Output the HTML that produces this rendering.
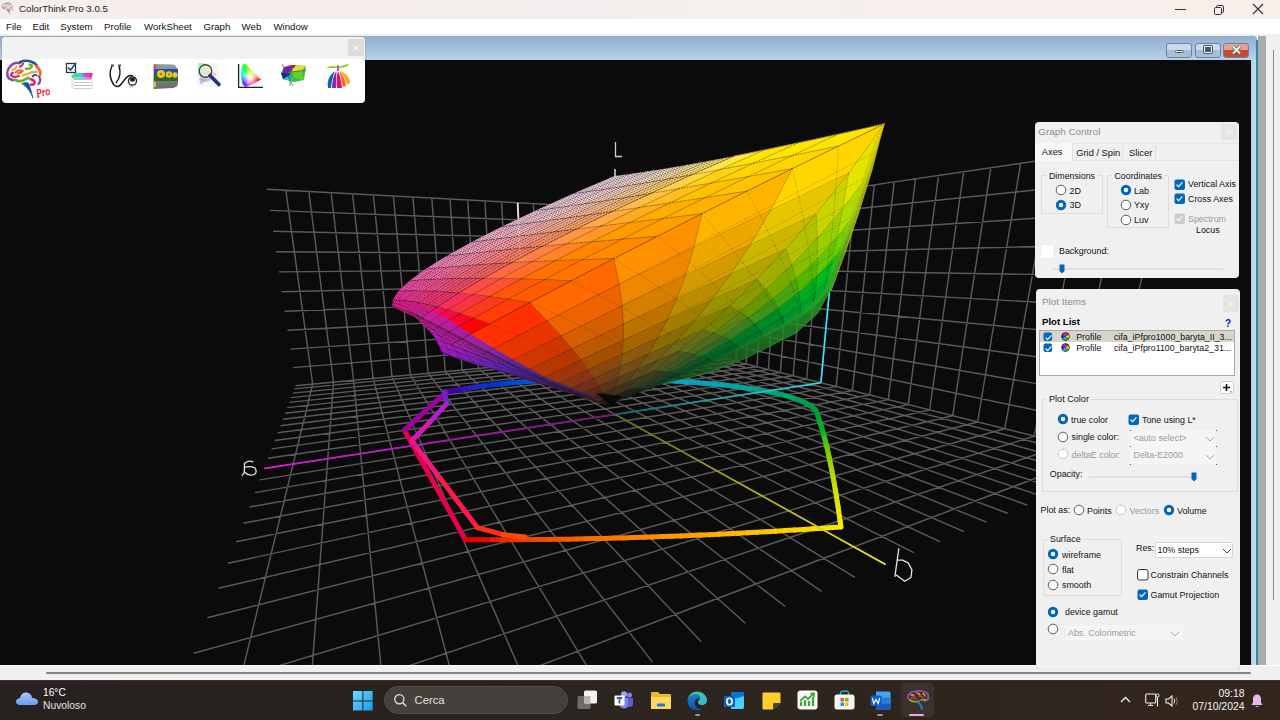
<!DOCTYPE html><html><head><meta charset="utf-8"><style>
*{margin:0;padding:0;box-sizing:border-box}
body{width:1280px;height:720px;overflow:hidden;position:relative;background:#f0f0f0;font-family:"Liberation Sans",sans-serif}
.abs{position:absolute}
.t{position:absolute;white-space:nowrap;line-height:1;font-family:"Liberation Sans",sans-serif}
</style></head><body>
<div class="abs" style="left:0;top:0;width:1280px;height:19px;background:linear-gradient(90deg,#f6eeea 0%,#f4eeee 45%,#f5efed 60%,#f8efea 100%)"></div><svg class="abs" style="left:1px;top:2px;opacity:0.75" width="15" height="13.1" viewBox="0 0 823 720" fill="none" stroke-linecap="round" stroke-linejoin="round">
<path d="M270 88C220 70 150 95 110 140C60 190 45 270 70 330C90 360 120 375 150 380" stroke="#8a4a9e" stroke-width="46"/>
<path d="M280 68C330 45 420 45 480 70C520 85 545 105 560 125" stroke="#1a56a6" stroke-width="46"/>
<path d="M550 135C590 165 620 210 625 260C625 285 615 300 605 310" stroke="#f0662a" stroke-width="44"/>
<path d="M600 320C625 350 630 400 590 445" stroke="#8a4a9e" stroke-width="40"/>
<path d="M140 205C175 200 200 185 212 150" stroke="#f4a82a" stroke-width="36"/>
<path d="M275 150C300 140 320 125 328 95" stroke="#e0206e" stroke-width="36"/>
<path d="M375 185C420 190 470 170 480 140C475 120 455 110 440 115" stroke="#6ab02a" stroke-width="42"/>
<path d="M200 245C230 215 280 205 325 220M240 265C265 255 290 250 300 240" stroke="#f0662a" stroke-width="34"/>
<path d="M150 255C115 270 110 300 140 315C180 325 230 320 255 310" stroke="#e0206e" stroke-width="38"/>
<path d="M325 300C370 280 410 275 440 255C480 240 520 238 555 238" stroke="#f4a82a" stroke-width="40"/>
<path d="M495 315C510 290 535 280 560 300" stroke="#1a56a6" stroke-width="34"/>
<path d="M180 370C230 400 300 405 350 375C375 360 395 345 420 340" stroke="#6ab02a" stroke-width="46"/>
<path d="M455 365C500 370 530 395 525 430C515 455 490 465 465 455" stroke="#e0206e" stroke-width="44"/>
<path d="M310 440C350 420 395 410 420 430C450 500 480 600 495 690C470 610 420 520 310 440Z" fill="#1a56a6" stroke="#1a56a6" stroke-width="12"/>

</svg><div class="t" style="left:19px;top:4.4px;font-size:9.7px;color:#1a1a1a;font-weight:normal;">ColorThink Pro 3.0.5</div><div class="abs" style="left:1175px;top:9px;width:11px;height:1px;background:#333"></div><svg class="abs" style="left:1213px;top:4px" width="12" height="12"><rect x="1.5" y="3.5" width="7" height="7" rx="1.2" fill="none" stroke="#333" stroke-width="1"/><path d="M3.5 3.5V2.8Q3.5 1.5 4.8 1.5H9.2Q10.5 1.5 10.5 2.8V7.2Q10.5 8.5 9.2 8.5H8.5" fill="none" stroke="#333" stroke-width="1"/></svg><svg class="abs" style="left:1252px;top:3px" width="12" height="12"><path d="M1 1L11 11M11 1L1 11" stroke="#333" stroke-width="1.1"/></svg><div class="abs" style="left:0;top:19px;width:1280px;height:15px;background:#fff"></div><div class="abs" style="left:0;top:34px;width:1280px;height:2px;background:linear-gradient(#f6f6f6,#e8e8e8)"></div><div class="t" style="left:6px;top:22.4px;font-size:9.7px;color:#111;font-weight:normal;">File</div><div class="t" style="left:32.5px;top:22.4px;font-size:9.7px;color:#111;font-weight:normal;">Edit</div><div class="t" style="left:60.3px;top:22.4px;font-size:9.7px;color:#111;font-weight:normal;">System</div><div class="t" style="left:104px;top:22.4px;font-size:9.7px;color:#111;font-weight:normal;">Profile</div><div class="t" style="left:144px;top:22.4px;font-size:9.7px;color:#111;font-weight:normal;">WorkSheet</div><div class="t" style="left:203.4px;top:22.4px;font-size:9.7px;color:#111;font-weight:normal;">Graph</div><div class="t" style="left:241.6px;top:22.4px;font-size:9.7px;color:#111;font-weight:normal;">Web</div><div class="t" style="left:273.4px;top:22.4px;font-size:9.7px;color:#111;font-weight:normal;">Window</div>
<div class="abs" style="left:1251px;top:36px;width:29px;height:644px;background:#f0f0f0"></div><div class="abs" style="left:0;top:36px;width:1257px;height:24px;background:linear-gradient(#93adca,#a9c3df 60%,#b8d2ec);border-top-right-radius:4px"></div><div class="abs" style="left:1251px;top:60px;width:5px;height:605px;background:linear-gradient(90deg,#b8d0ea,#c5dcf2)"></div><div class="abs" style="left:1256px;top:40px;width:1.5px;height:625px;background:#2a8aa0"></div><div class="abs" style="left:1258px;top:36px;width:8px;height:629px;background:#ababab"></div><div class="abs" style="left:1272.5px;top:50px;width:1.5px;height:550px;background:#8a8a8a"></div><div class="abs" style="left:1166px;top:42.5px;width:26px;height:15px;border:1px solid #6f83a0;border-radius:3px;background:linear-gradient(#c9dbee 0%,#c9dbee 45%,#a6bfdb 50%,#a6bfdb 100%)"><div class="abs" style="left:8px;top:6px;width:9px;height:3.5px;background:#fff;border:1px solid #555;border-radius:2px"></div></div><div class="abs" style="left:1194.5px;top:42.5px;width:26px;height:15px;border:1px solid #6f83a0;border-radius:3px;background:linear-gradient(#c9dbee 0%,#c9dbee 45%,#a6bfdb 50%,#a6bfdb 100%)"><div class="abs" style="left:8.5px;top:2.5px;width:8px;height:7px;background:#3a5a80;border:1.5px solid #fff;outline:1px solid #555;border-radius:1px"></div></div><div class="abs" style="left:1222.5px;top:42.5px;width:26px;height:15px;border:1px solid #6f83a0;border-radius:3px;background:linear-gradient(#e8a090 0%,#e8a090 45%,#c84a30 50%,#c84a30 100%)"><svg class="abs" style="left:7px;top:1.5px" width="11" height="10"><path d="M2 1.5L9 8.5M9 1.5L2 8.5" stroke="#555" stroke-width="3.2"/><path d="M2 1.5L9 8.5M9 1.5L2 8.5" stroke="#fff" stroke-width="1.8"/></svg></div><div class="abs" style="left:0;top:665px;width:1280px;height:15px;background:#f0f0f0;border-top:1px solid #fff"></div><div class="abs" style="left:46px;top:672px;width:1205px;height:2px;background:#858585;border-radius:1px"></div>
<div class="abs" style="left:0;top:60px;width:1251px;height:605px;background:#0b0b0b;overflow:hidden">
<svg width="1251" height="605" viewBox="0 60 1251 605" style="position:absolute;left:0;top:0">
<path d="M676.9 349.7L1122.6 465.2M665.8 350.8L1108.9 470.9M654.5 351.8L1094.5 477.0M643.0 352.9L1079.2 483.4M631.1 354.0L1062.9 490.2M618.9 355.2L1045.7 497.4M606.5 356.4L1027.3 505.1M593.7 357.6L1007.7 513.3M580.6 358.8L986.6 522.1M567.1 360.1L964.1 531.6M553.3 361.4L939.9 541.7M539.1 362.7L913.8 552.7M524.6 364.1L885.6 564.5M509.6 365.5L854.9 577.3M494.2 367.0L821.6 591.3M478.4 368.5L785.2 606.5M462.1 370.0L745.3 623.2M445.3 371.6L701.3 641.7M428.1 373.3L652.5 662.1M410.3 374.9L598.3 684.8M392.0 376.7L537.5 710.2M373.1 378.5L468.9 739.0M353.6 380.3L391.0 771.6M333.5 382.2L301.6 809.0M312.7 384.2L198.1 852.4M691.7 350.4L294.4 388.9M699.7 352.5L292.8 393.1M708.2 354.6L291.1 397.6M717.0 356.8L289.3 402.4M726.3 359.1L287.3 407.6M736.0 361.5L285.2 413.2M746.2 364.1L282.9 419.2M757.0 366.8L280.4 425.7M768.4 369.6L277.7 432.7M780.4 372.6L274.8 440.5M793.2 375.8L271.6 448.9M806.6 379.2L268.0 458.2M820.9 382.8L264.1 468.5M836.2 386.6L259.8 479.9M852.4 390.7L254.9 492.6M869.7 395.0L249.5 507.0M888.3 399.6L243.3 523.2M908.2 404.6L236.2 541.8M929.6 410.0L228.0 563.3M952.7 415.7L218.5 588.3M977.6 422.0L207.2 617.8M1004.8 428.8L193.7 653.3M1034.3 436.2L177.2 696.6M1066.6 444.3L156.5 750.8M1102.0 453.1L130.0 820.5M676.9 349.7L680.5 211.5M665.8 350.8L668.8 210.9M654.5 351.8L656.8 210.2M643.0 352.9L644.5 209.6M631.1 354.0L631.9 208.9M618.9 355.2L619.0 208.2M606.5 356.4L605.7 207.5M593.7 357.6L592.0 206.7M580.6 358.8L578.0 206.0M567.1 360.1L563.5 205.2M553.3 361.4L548.7 204.4M539.1 362.7L533.4 203.6M524.6 364.1L517.7 202.7M509.6 365.5L501.6 201.9M494.2 367.0L484.9 201.0M478.4 368.5L467.7 200.0M462.1 370.0L450.0 199.1M445.3 371.6L431.8 198.1M428.1 373.3L412.9 197.1M410.3 374.9L393.4 196.0M392.0 376.7L373.3 195.0M373.1 378.5L352.6 193.8M353.6 380.3L331.1 192.7M333.5 382.2L308.8 191.5M312.7 384.2L285.8 190.2M685.5 348.9L295.6 385.8M685.9 335.9L293.0 367.6M686.3 322.8L290.2 349.1M686.7 309.5L287.5 330.3M687.1 296.1L284.7 311.2M687.5 282.5L281.8 291.7M687.9 268.7L278.9 271.9M688.3 254.8L276.0 251.8M688.8 240.7L273.0 231.3M689.2 226.4L269.9 210.4M689.6 212.0L266.8 189.2M691.7 350.4L696.3 211.0M699.7 352.5L704.9 209.7M708.2 354.6L714.0 208.4M717.0 356.8L723.6 207.0M726.3 359.1L733.7 205.5M736.0 361.5L744.3 204.0M746.2 364.1L755.5 202.3M757.0 366.8L767.4 200.6M768.4 369.6L780.0 198.7M780.4 372.6L793.3 196.8M793.2 375.8L807.5 194.7M806.6 379.2L822.6 192.5M820.9 382.8L838.7 190.1M836.2 386.6L855.9 187.6M852.4 390.7L874.3 184.9M869.7 395.0L894.2 181.9M888.3 399.6L915.5 178.8M908.2 404.6L938.6 175.4M929.6 410.0L963.7 171.7M952.7 415.7L990.9 167.7M977.6 422.0L1020.6 163.4M1004.8 428.8L1053.2 158.6M1034.3 436.2L1089.0 153.3M1066.6 444.3L1128.7 147.5M1102.0 453.1L1172.8 141.0M685.5 348.9L1133.0 460.9M685.9 335.9L1139.9 432.3M686.3 322.8L1147.0 402.9M686.7 309.5L1154.3 372.7M687.1 296.1L1161.9 341.6M687.5 282.5L1169.6 309.7M687.9 268.7L1177.6 276.8M688.3 254.8L1185.7 243.0M688.8 240.7L1194.2 208.1M689.2 226.4L1202.9 172.2M689.6 212.0L1211.8 135.3" stroke="#5a5a5a" stroke-width="1.45" fill="none"/>
<g stroke-width="5.0" stroke-linecap="round"><line x1="404.3" y1="430.1" x2="465.4" y2="539.7" stroke="#e8004b"/><line x1="465.4" y1="539.7" x2="474.5" y2="539.7" stroke="#e60000"/><line x1="474.5" y1="539.7" x2="483.6" y2="539.8" stroke="#e80000"/><line x1="483.6" y1="539.8" x2="492.7" y2="539.8" stroke="#e90900"/><line x1="492.7" y1="539.8" x2="501.9" y2="539.8" stroke="#eb1d00"/><line x1="501.9" y1="539.8" x2="511.1" y2="539.7" stroke="#ec2a00"/><line x1="511.1" y1="539.7" x2="520.4" y2="539.7" stroke="#ee3400"/><line x1="520.4" y1="539.7" x2="529.7" y2="539.6" stroke="#ef3c00"/><line x1="529.7" y1="539.6" x2="539.0" y2="539.5" stroke="#f04400"/><line x1="539.0" y1="539.5" x2="548.3" y2="539.4" stroke="#f24b00"/><line x1="548.3" y1="539.4" x2="557.7" y2="539.3" stroke="#f35100"/><line x1="557.7" y1="539.3" x2="567.1" y2="539.2" stroke="#f45800"/><line x1="567.1" y1="539.2" x2="576.5" y2="539.0" stroke="#f55e00"/><line x1="576.5" y1="539.0" x2="585.9" y2="538.8" stroke="#f76300"/><line x1="585.9" y1="538.8" x2="595.4" y2="538.6" stroke="#f86900"/><line x1="595.4" y1="538.6" x2="604.8" y2="538.4" stroke="#f96f00"/><line x1="604.8" y1="538.4" x2="614.3" y2="538.1" stroke="#fa7400"/><line x1="614.3" y1="538.1" x2="623.8" y2="537.9" stroke="#fb7900"/><line x1="623.8" y1="537.9" x2="633.3" y2="537.6" stroke="#fc7f00"/><line x1="633.3" y1="537.6" x2="642.8" y2="537.3" stroke="#fd8400"/><line x1="642.8" y1="537.3" x2="652.3" y2="537.0" stroke="#fe8900"/><line x1="652.3" y1="537.0" x2="661.9" y2="536.6" stroke="#ff8e00"/><line x1="661.9" y1="536.6" x2="671.4" y2="536.3" stroke="#ff9300"/><line x1="671.4" y1="536.3" x2="680.9" y2="535.9" stroke="#ff9800"/><line x1="680.9" y1="535.9" x2="690.4" y2="535.5" stroke="#ff9c00"/><line x1="690.4" y1="535.5" x2="699.9" y2="535.1" stroke="#ffa100"/><line x1="699.9" y1="535.1" x2="709.5" y2="534.7" stroke="#ffa600"/><line x1="709.5" y1="534.7" x2="719.0" y2="534.2" stroke="#ffab00"/><line x1="719.0" y1="534.2" x2="728.4" y2="533.8" stroke="#ffb000"/><line x1="728.4" y1="533.8" x2="737.9" y2="533.3" stroke="#ffb400"/><line x1="737.9" y1="533.3" x2="747.4" y2="532.8" stroke="#ffb900"/><line x1="747.4" y1="532.8" x2="756.8" y2="532.3" stroke="#ffbe00"/><line x1="756.8" y1="532.3" x2="766.3" y2="531.7" stroke="#ffc300"/><line x1="766.3" y1="531.7" x2="775.7" y2="531.2" stroke="#ffc700"/><line x1="775.7" y1="531.2" x2="785.1" y2="530.6" stroke="#ffcc00"/><line x1="785.1" y1="530.6" x2="794.5" y2="530.0" stroke="#ffd100"/><line x1="794.5" y1="530.0" x2="803.8" y2="529.5" stroke="#ffd500"/><line x1="803.8" y1="529.5" x2="813.1" y2="528.8" stroke="#ffda00"/><line x1="813.1" y1="528.8" x2="822.4" y2="528.2" stroke="#ffdf00"/><line x1="822.4" y1="528.2" x2="831.7" y2="527.6" stroke="#ffe300"/><line x1="831.7" y1="527.6" x2="840.9" y2="526.9" stroke="#ffe800"/><line x1="840.9" y1="526.9" x2="840.1" y2="521.4" stroke="#ffea00"/><line x1="840.1" y1="521.4" x2="839.4" y2="516.2" stroke="#fbe900"/><line x1="839.4" y1="516.2" x2="838.7" y2="511.2" stroke="#f4e800"/><line x1="838.7" y1="511.2" x2="838.0" y2="506.4" stroke="#eee600"/><line x1="838.0" y1="506.4" x2="837.2" y2="501.8" stroke="#e7e500"/><line x1="837.2" y1="501.8" x2="836.6" y2="497.4" stroke="#e1e400"/><line x1="836.6" y1="497.4" x2="835.9" y2="493.1" stroke="#dae300"/><line x1="835.9" y1="493.1" x2="835.2" y2="489.1" stroke="#d3e100"/><line x1="835.2" y1="489.1" x2="834.5" y2="485.1" stroke="#cde000"/><line x1="834.5" y1="485.1" x2="833.9" y2="481.4" stroke="#c6de00"/><line x1="833.9" y1="481.4" x2="833.2" y2="477.7" stroke="#bfdd00"/><line x1="833.2" y1="477.7" x2="832.6" y2="474.2" stroke="#b8db00"/><line x1="832.6" y1="474.2" x2="831.9" y2="470.8" stroke="#b1da00"/><line x1="831.9" y1="470.8" x2="831.3" y2="467.6" stroke="#aad800"/><line x1="831.3" y1="467.6" x2="830.6" y2="464.4" stroke="#a2d600"/><line x1="830.6" y1="464.4" x2="830.0" y2="461.4" stroke="#9bd400"/><line x1="830.0" y1="461.4" x2="829.4" y2="458.4" stroke="#93d300"/><line x1="829.4" y1="458.4" x2="828.8" y2="455.6" stroke="#8cd100"/><line x1="828.8" y1="455.6" x2="828.2" y2="452.8" stroke="#84cf00"/><line x1="828.2" y1="452.8" x2="827.6" y2="450.2" stroke="#7ccd00"/><line x1="827.6" y1="450.2" x2="827.0" y2="447.6" stroke="#73cb00"/><line x1="827.0" y1="447.6" x2="826.4" y2="445.1" stroke="#6ac900"/><line x1="826.4" y1="445.1" x2="825.8" y2="442.6" stroke="#61c706"/><line x1="825.8" y1="442.6" x2="825.2" y2="440.3" stroke="#57c40e"/><line x1="825.2" y1="440.3" x2="824.6" y2="438.0" stroke="#4cc214"/><line x1="824.6" y1="438.0" x2="824.0" y2="435.8" stroke="#40c019"/><line x1="824.0" y1="435.8" x2="823.4" y2="433.6" stroke="#31be1d"/><line x1="823.4" y1="433.6" x2="822.8" y2="431.5" stroke="#1cbb20"/><line x1="822.8" y1="431.5" x2="822.2" y2="429.5" stroke="#00b923"/><line x1="822.2" y1="429.5" x2="821.6" y2="427.5" stroke="#00b625"/><line x1="821.6" y1="427.5" x2="821.0" y2="425.6" stroke="#00b428"/><line x1="821.0" y1="425.6" x2="820.5" y2="423.7" stroke="#00b12a"/><line x1="820.5" y1="423.7" x2="819.9" y2="421.9" stroke="#00af2c"/><line x1="819.9" y1="421.9" x2="819.3" y2="420.1" stroke="#00ac2d"/><line x1="819.3" y1="420.1" x2="818.7" y2="418.3" stroke="#00a92f"/><line x1="818.7" y1="418.3" x2="818.2" y2="416.7" stroke="#00a731"/><line x1="818.2" y1="416.7" x2="817.6" y2="415.0" stroke="#00a432"/><line x1="817.6" y1="415.0" x2="817.0" y2="413.4" stroke="#00a133"/><line x1="817.0" y1="413.4" x2="816.4" y2="411.8" stroke="#009e34"/><line x1="816.4" y1="411.8" x2="815.9" y2="410.3" stroke="#009b35"/><line x1="815.9" y1="410.3" x2="814.6" y2="409.0" stroke="#009a38"/><line x1="814.6" y1="409.0" x2="813.1" y2="407.8" stroke="#009b3c"/><line x1="813.1" y1="407.8" x2="811.6" y2="406.6" stroke="#009b3f"/><line x1="811.6" y1="406.6" x2="809.8" y2="405.5" stroke="#009c43"/><line x1="809.8" y1="405.5" x2="808.0" y2="404.4" stroke="#009c47"/><line x1="808.0" y1="404.4" x2="806.0" y2="403.3" stroke="#009d4b"/><line x1="806.0" y1="403.3" x2="803.9" y2="402.2" stroke="#009d4e"/><line x1="803.9" y1="402.2" x2="801.7" y2="401.2" stroke="#009e52"/><line x1="801.7" y1="401.2" x2="799.3" y2="400.2" stroke="#009e56"/><line x1="799.3" y1="400.2" x2="796.8" y2="399.3" stroke="#009f59"/><line x1="796.8" y1="399.3" x2="794.2" y2="398.3" stroke="#009f5d"/><line x1="794.2" y1="398.3" x2="791.5" y2="397.4" stroke="#00a061"/><line x1="791.5" y1="397.4" x2="788.7" y2="396.6" stroke="#00a065"/><line x1="788.7" y1="396.6" x2="785.7" y2="395.7" stroke="#00a068"/><line x1="785.7" y1="395.7" x2="782.6" y2="394.9" stroke="#00a16c"/><line x1="782.6" y1="394.9" x2="779.4" y2="394.1" stroke="#00a170"/><line x1="779.4" y1="394.1" x2="776.1" y2="393.3" stroke="#00a173"/><line x1="776.1" y1="393.3" x2="772.7" y2="392.6" stroke="#00a277"/><line x1="772.7" y1="392.6" x2="769.2" y2="391.8" stroke="#00a27b"/><line x1="769.2" y1="391.8" x2="765.6" y2="391.1" stroke="#00a27f"/><line x1="765.6" y1="391.1" x2="761.8" y2="390.4" stroke="#00a283"/><line x1="761.8" y1="390.4" x2="758.0" y2="389.8" stroke="#00a386"/><line x1="758.0" y1="389.8" x2="754.0" y2="389.1" stroke="#00a38a"/><line x1="754.0" y1="389.1" x2="750.0" y2="388.5" stroke="#00a38e"/><line x1="750.0" y1="388.5" x2="745.8" y2="387.9" stroke="#00a392"/><line x1="745.8" y1="387.9" x2="741.5" y2="387.3" stroke="#00a396"/><line x1="741.5" y1="387.3" x2="737.1" y2="386.7" stroke="#00a49a"/><line x1="737.1" y1="386.7" x2="732.6" y2="386.2" stroke="#00a49e"/><line x1="732.6" y1="386.2" x2="728.0" y2="385.6" stroke="#00a4a2"/><line x1="728.0" y1="385.6" x2="723.3" y2="385.1" stroke="#00a4a6"/><line x1="723.3" y1="385.1" x2="718.5" y2="384.6" stroke="#00a4aa"/><line x1="718.5" y1="384.6" x2="713.6" y2="384.1" stroke="#00a4ae"/><line x1="713.6" y1="384.1" x2="708.5" y2="383.7" stroke="#00a4b2"/><line x1="708.5" y1="383.7" x2="703.4" y2="383.2" stroke="#00a4b7"/><line x1="703.4" y1="383.2" x2="698.2" y2="382.8" stroke="#00a4bb"/><line x1="698.2" y1="382.8" x2="692.8" y2="382.3" stroke="#00a4bf"/><line x1="692.8" y1="382.3" x2="687.3" y2="381.9" stroke="#00a4c3"/><line x1="687.3" y1="381.9" x2="681.8" y2="381.5" stroke="#00a3c8"/><line x1="681.8" y1="381.5" x2="676.1" y2="381.2" stroke="#00a3cc"/><line x1="676.1" y1="381.2" x2="670.3" y2="380.8" stroke="#00a3d1"/><line x1="670.3" y1="380.8" x2="662.9" y2="380.5" stroke="#00a1d4"/><line x1="662.9" y1="380.5" x2="655.6" y2="380.3" stroke="#009ed6"/><line x1="655.6" y1="380.3" x2="648.5" y2="380.0" stroke="#009bd8"/><line x1="648.5" y1="380.0" x2="641.5" y2="379.9" stroke="#0098da"/><line x1="641.5" y1="379.9" x2="634.7" y2="379.7" stroke="#0095db"/><line x1="634.7" y1="379.7" x2="627.9" y2="379.6" stroke="#0091dd"/><line x1="627.9" y1="379.6" x2="621.3" y2="379.5" stroke="#008ede"/><line x1="621.3" y1="379.5" x2="614.8" y2="379.4" stroke="#008bdf"/><line x1="614.8" y1="379.4" x2="608.5" y2="379.3" stroke="#0088e0"/><line x1="608.5" y1="379.3" x2="602.2" y2="379.3" stroke="#0084e1"/><line x1="602.2" y1="379.3" x2="596.0" y2="379.3" stroke="#0081e1"/><line x1="596.0" y1="379.3" x2="590.0" y2="379.3" stroke="#007ee2"/><line x1="590.0" y1="379.3" x2="584.0" y2="379.4" stroke="#007ae2"/><line x1="584.0" y1="379.4" x2="578.1" y2="379.5" stroke="#0077e2"/><line x1="578.1" y1="379.5" x2="572.3" y2="379.6" stroke="#0074e2"/><line x1="572.3" y1="379.6" x2="566.6" y2="379.7" stroke="#0070e1"/><line x1="566.6" y1="379.7" x2="561.0" y2="379.9" stroke="#006de1"/><line x1="561.0" y1="379.9" x2="555.5" y2="380.1" stroke="#0069e0"/><line x1="555.5" y1="380.1" x2="550.0" y2="380.3" stroke="#0066df"/><line x1="550.0" y1="380.3" x2="544.6" y2="380.5" stroke="#0062de"/><line x1="544.6" y1="380.5" x2="539.2" y2="380.8" stroke="#005fdd"/><line x1="539.2" y1="380.8" x2="533.9" y2="381.1" stroke="#005bdb"/><line x1="533.9" y1="381.1" x2="528.7" y2="381.4" stroke="#0057da"/><line x1="528.7" y1="381.4" x2="523.5" y2="381.8" stroke="#0053d8"/><line x1="523.5" y1="381.8" x2="518.4" y2="382.2" stroke="#0050d6"/><line x1="518.4" y1="382.2" x2="513.3" y2="382.6" stroke="#004cd4"/><line x1="513.3" y1="382.6" x2="508.3" y2="383.1" stroke="#0048d2"/><line x1="508.3" y1="383.1" x2="503.3" y2="383.6" stroke="#0044d0"/><line x1="503.3" y1="383.6" x2="498.4" y2="384.1" stroke="#003fcd"/><line x1="498.4" y1="384.1" x2="493.5" y2="384.6" stroke="#003bca"/><line x1="493.5" y1="384.6" x2="488.6" y2="385.2" stroke="#0036c7"/><line x1="488.6" y1="385.2" x2="483.8" y2="385.9" stroke="#0832c4"/><line x1="483.8" y1="385.9" x2="478.9" y2="386.5" stroke="#192dc1"/><line x1="478.9" y1="386.5" x2="474.2" y2="387.2" stroke="#2327be"/><line x1="474.2" y1="387.2" x2="469.4" y2="388.0" stroke="#2a21ba"/><line x1="469.4" y1="388.0" x2="464.6" y2="388.7" stroke="#311ab7"/><line x1="464.6" y1="388.7" x2="459.9" y2="389.6" stroke="#3612b3"/><line x1="459.9" y1="389.6" x2="455.2" y2="390.4" stroke="#3b06af"/><line x1="455.2" y1="390.4" x2="450.5" y2="391.3" stroke="#3f00ab"/><line x1="450.5" y1="391.3" x2="445.7" y2="392.3" stroke="#4200a7"/><line x1="445.7" y1="392.3" x2="404.3" y2="430.1" stroke="#9b00a0"/></g>
<g stroke-width="5" stroke-linecap="round" fill="none">
<path d="M444.3 393L446.7 403.6" stroke="#7020d8"/><path d="M446.7 403.6L430 422" stroke="#b020c8"/><path d="M430 422L412.4 440.2" stroke="#d818b0"/>
<path d="M412.4 441.4L440 478" stroke="#f01880"/><path d="M440 478L477.4 527.6" stroke="#ff1848"/><path d="M477.4 527.6L503.3 534.7" stroke="#ff3010"/><path d="M503.3 534.7L525 537" stroke="#ff4a08"/>
</g>
<linearGradient id="ga" gradientUnits="userSpaceOnUse" x1="615.2" y1="414.4" x2="264.1" y2="468.5"><stop offset="0" stop-color="#701870"/><stop offset="1" stop-color="#f010f0"/></linearGradient><line x1="615.2" y1="414.4" x2="264.1" y2="468.5" stroke="url(#ga)" stroke-width="1.6"/><linearGradient id="gb" gradientUnits="userSpaceOnUse" x1="615.2" y1="414.4" x2="885.6" y2="564.5"><stop offset="0" stop-color="#6a6a10"/><stop offset="1" stop-color="#f0f010"/></linearGradient><line x1="615.2" y1="414.4" x2="885.6" y2="564.5" stroke="url(#gb)" stroke-width="1.6"/><linearGradient id="gc" gradientUnits="userSpaceOnUse" x1="615.2" y1="414.4" x2="820.9" y2="382.8"><stop offset="0" stop-color="#106070"/><stop offset="1" stop-color="#30e0f0"/></linearGradient><line x1="615.2" y1="414.4" x2="820.9" y2="382.8" stroke="url(#gc)" stroke-width="1.6"/><line x1="820.9" y1="382.8" x2="838.7" y2="190.1" stroke="#30e8f8" stroke-width="1.6"/><line x1="524.6" y1="364.1" x2="517.7" y2="202.7" stroke="#e8e8e8" stroke-width="1.8"/>
<polygon points="451.0,355.9 447.4,348.7 439.4,346.0 442.7,353.5" fill="#6b00c2" stroke="#6b00c2" stroke-width="0.7"/><polygon points="461.0,358.9 457.0,352.0 447.4,348.7 451.0,355.9" fill="#6c00b4" stroke="#6c00b4" stroke-width="0.7"/><polygon points="447.4,348.7 443.4,342.0 435.8,339.1 439.4,346.0" fill="#8400c5" stroke="#8400c5" stroke-width="0.7"/><polygon points="472.7,362.4 468.3,355.9 457.0,352.0 461.0,358.9" fill="#6b03a5" stroke="#6b03a5" stroke-width="0.7"/><polygon points="457.0,352.0 452.6,345.5 443.4,342.0 447.4,348.7" fill="#8401b6" stroke="#8401b6" stroke-width="0.7"/><polygon points="443.4,342.0 439.1,335.7 431.8,332.7 435.8,339.1" fill="#9902c6" stroke="#9902c6" stroke-width="0.7"/><polygon points="486.2,366.6 481.2,360.4 468.3,355.9 472.7,362.4" fill="#680c94" stroke="#680c94" stroke-width="0.7"/><polygon points="468.3,355.9 463.4,349.6 452.6,345.5 457.0,352.0" fill="#8309a6" stroke="#8309a6" stroke-width="0.7"/><polygon points="439.1,335.7 434.4,329.8 427.5,326.8 431.8,332.7" fill="#ad08c6" stroke="#ad08c6" stroke-width="0.7"/><polygon points="452.6,345.5 447.8,339.3 439.1,335.7 443.4,342.0" fill="#9a08b7" stroke="#9a08b7" stroke-width="0.7"/><polygon points="501.5,371.3 496.0,365.6 481.2,360.4 486.2,366.6" fill="#631284" stroke="#631284" stroke-width="0.7"/><polygon points="481.2,360.4 475.8,354.4 463.4,349.6 468.3,355.9" fill="#7f1096" stroke="#7f1096" stroke-width="0.7"/><polygon points="434.4,329.8 429.3,324.5 422.8,321.6 427.5,326.8" fill="#be0bc5" stroke="#be0bc5" stroke-width="0.7"/><polygon points="463.4,349.6 458.0,343.6 447.8,339.3 452.6,345.5" fill="#980ea6" stroke="#980ea6" stroke-width="0.7"/><polygon points="447.8,339.3 442.6,333.5 434.4,329.8 439.1,335.7" fill="#ad0cb6" stroke="#ad0cb6" stroke-width="0.7"/><polygon points="518.7,376.7 512.6,371.4 496.0,365.6 501.5,371.3" fill="#5c1772" stroke="#5c1772" stroke-width="0.7"/><polygon points="496.0,365.6 489.9,359.8 475.8,354.4 481.2,360.4" fill="#7a1684" stroke="#7a1684" stroke-width="0.7"/><polygon points="429.3,324.5 423.7,319.8 417.7,317.0 422.8,321.6" fill="#ce09c2" stroke="#ce09c2" stroke-width="0.7"/><polygon points="475.8,354.4 469.8,348.5 458.0,343.6 463.4,349.6" fill="#951495" stroke="#951495" stroke-width="0.7"/><polygon points="442.6,333.5 436.9,328.1 429.3,324.5 434.4,329.8" fill="#be0eb4" stroke="#be0eb4" stroke-width="0.7"/><polygon points="458.0,343.6 452.2,337.8 442.6,333.5 447.8,339.3" fill="#ab11a6" stroke="#ab11a6" stroke-width="0.7"/><polygon points="537.8,382.8 531.1,377.9 512.6,371.4 518.7,376.7" fill="#541a60" stroke="#541a60" stroke-width="0.7"/><polygon points="512.6,371.4 505.9,366.0 489.9,359.8 496.0,365.6" fill="#741a72" stroke="#741a72" stroke-width="0.7"/><polygon points="815.4,292.4 813.6,307.1 822.1,298.8 826.9,280.8" fill="#00ab32" stroke="#00ab32" stroke-width="0.7"/><polygon points="826.9,280.8 822.1,298.8 826.7,291.5 834.8,269.8" fill="#00b536" stroke="#00b536" stroke-width="0.7"/><polygon points="423.7,319.8 417.5,315.7 412.1,313.2 417.7,317.0" fill="#dc02be" stroke="#dc02be" stroke-width="0.7"/><polygon points="800.4,304.5 801.2,316.2 813.6,307.1 815.4,292.4" fill="#009f2f" stroke="#009f2f" stroke-width="0.7"/><polygon points="558.8,389.5 551.6,385.1 531.1,377.9 537.8,382.8" fill="#491c4d" stroke="#491c4d" stroke-width="0.7"/><polygon points="781.9,317.2 784.9,326.2 801.2,316.2 800.4,304.5" fill="#00922e" stroke="#00922e" stroke-width="0.7"/><polygon points="489.9,359.8 483.3,354.1 469.8,348.5 475.8,354.4" fill="#901884" stroke="#901884" stroke-width="0.7"/><polygon points="436.9,328.1 430.7,323.1 423.7,319.8 429.3,324.5" fill="#cf0bb1" stroke="#cf0bb1" stroke-width="0.7"/><polygon points="760.3,330.5 764.8,337.1 784.9,326.2 781.9,317.2" fill="#00842c" stroke="#00842c" stroke-width="0.7"/><polygon points="469.8,348.5 463.3,342.7 452.2,337.8 458.0,343.6" fill="#a81594" stroke="#a81594" stroke-width="0.7"/><polygon points="452.2,337.8 445.9,332.3 436.9,328.1 442.6,333.5" fill="#bd11a3" stroke="#bd11a3" stroke-width="0.7"/><polygon points="735.5,344.4 740.8,348.9 764.8,337.1 760.3,330.5" fill="#00742b" stroke="#00742b" stroke-width="0.7"/><polygon points="531.1,377.9 523.8,372.9 505.9,366.0 512.6,371.4" fill="#6b1d60" stroke="#6b1d60" stroke-width="0.7"/><polygon points="581.9,396.9 574.1,393.1 551.6,385.1 558.8,389.5" fill="#3d1c39" stroke="#3d1c39" stroke-width="0.7"/><polygon points="707.7,358.7 713.0,361.6 740.8,348.9 735.5,344.4" fill="#006229" stroke="#006229" stroke-width="0.7"/><polygon points="606.9,404.9 606.9,404.9 646.1,389.6 643.3,389.0" fill="#1a231f" stroke="#1a231f" stroke-width="0.7"/><polygon points="676.9,373.6 681.4,375.1 713.0,361.6 707.7,358.7" fill="#004f27" stroke="#004f27" stroke-width="0.7"/><polygon points="417.5,315.7 410.8,312.3 406.0,310.2 412.1,313.2" fill="#e900b9" stroke="#e900b9" stroke-width="0.7"/><polygon points="643.3,389.0 646.1,389.6 681.4,375.1 676.9,373.6" fill="#103a24" stroke="#103a24" stroke-width="0.7"/><polygon points="606.9,404.9 606.9,404.9 643.3,389.0 640.3,388.6" fill="#1e231f" stroke="#1e231f" stroke-width="0.7"/><polygon points="505.9,366.0 498.6,360.5 483.3,354.1 489.9,359.8" fill="#891c72" stroke="#891c72" stroke-width="0.7"/><polygon points="606.9,404.9 606.9,404.9 640.3,388.6 637.2,388.4" fill="#21241f" stroke="#21241f" stroke-width="0.7"/><polygon points="430.7,323.1 423.9,318.7 417.5,315.7 423.7,319.8" fill="#dd04ad" stroke="#dd04ad" stroke-width="0.7"/><polygon points="606.9,404.9 598.7,401.8 574.1,393.1 581.9,396.9" fill="#2f1b25" stroke="#2f1b25" stroke-width="0.7"/><polygon points="606.9,404.9 606.9,404.9 637.2,388.4 633.8,388.4" fill="#24241f" stroke="#24241f" stroke-width="0.7"/><polygon points="483.3,354.1 476.1,348.5 463.3,342.7 469.8,348.5" fill="#a41982" stroke="#a41982" stroke-width="0.7"/><polygon points="445.9,332.3 438.9,327.1 430.7,323.1 436.9,328.1" fill="#ce0fa0" stroke="#ce0fa0" stroke-width="0.7"/><polygon points="640.3,388.6 643.3,389.0 676.9,373.6 671.9,372.4" fill="#1e3c24" stroke="#1e3c24" stroke-width="0.7"/><polygon points="463.3,342.7 456.2,337.2 445.9,332.3 452.2,337.8" fill="#ba1592" stroke="#ba1592" stroke-width="0.7"/><polygon points="606.9,404.9 606.9,404.9 633.8,388.4 630.3,388.5" fill="#26241e" stroke="#26241e" stroke-width="0.7"/><polygon points="551.6,385.1 543.6,380.5 523.8,372.9 531.1,377.9" fill="#611f4d" stroke="#611f4d" stroke-width="0.7"/><polygon points="606.9,404.9 606.9,404.9 604.7,399.2 598.7,401.8" fill="#281b1c" stroke="#281b1c" stroke-width="0.7"/><polygon points="606.9,404.9 606.9,404.9 611.0,396.6 604.7,399.2" fill="#281d1c" stroke="#281d1c" stroke-width="0.7"/><polygon points="606.9,404.9 606.9,404.9 617.3,393.9 611.0,396.6" fill="#281f1d" stroke="#281f1d" stroke-width="0.7"/><polygon points="606.9,404.9 606.9,404.9 623.7,391.2 617.3,393.9" fill="#28211d" stroke="#28211d" stroke-width="0.7"/><polygon points="606.9,404.9 606.9,404.9 630.3,388.5 623.7,391.2" fill="#28231e" stroke="#28231e" stroke-width="0.7"/><polygon points="671.9,372.4 676.9,373.6 707.7,358.7 701.6,356.3" fill="#175226" stroke="#175226" stroke-width="0.7"/><polygon points="637.2,388.4 640.3,388.6 671.9,372.4 666.5,371.5" fill="#293d23" stroke="#293d23" stroke-width="0.7"/><polygon points="701.6,356.3 707.7,358.7 735.5,344.4 729.3,340.2" fill="#026727" stroke="#026727" stroke-width="0.7"/><polygon points="523.8,372.9 515.7,367.7 498.6,360.5 505.9,366.0" fill="#811f5f" stroke="#811f5f" stroke-width="0.7"/><polygon points="729.3,340.2 735.5,344.4 760.3,330.5 754.8,324.1" fill="#007a26" stroke="#007a26" stroke-width="0.7"/><polygon points="423.9,318.7 416.4,314.9 410.8,312.3 417.5,315.7" fill="#eb00a8" stroke="#eb00a8" stroke-width="0.7"/><polygon points="754.8,324.1 760.3,330.5 781.9,317.2 778.0,308.1" fill="#008c25" stroke="#008c25" stroke-width="0.7"/><polygon points="574.1,393.1 565.5,389.0 543.6,380.5 551.6,385.1" fill="#552039" stroke="#552039" stroke-width="0.7"/><polygon points="778.0,308.1 781.9,317.2 800.4,304.5 798.7,292.2" fill="#009d23" stroke="#009d23" stroke-width="0.7"/><polygon points="498.6,360.5 490.5,354.9 476.1,348.5 483.3,354.1" fill="#9d1d70" stroke="#9d1d70" stroke-width="0.7"/><polygon points="438.9,327.1 431.2,322.4 423.9,318.7 430.7,323.1" fill="#dd079c" stroke="#dd079c" stroke-width="0.7"/><polygon points="633.8,388.4 637.2,388.4 666.5,371.5 660.6,370.9" fill="#333e22" stroke="#333e22" stroke-width="0.7"/><polygon points="798.7,292.2 800.4,304.5 815.4,292.4 816.8,276.3" fill="#00ac21" stroke="#00ac21" stroke-width="0.7"/><polygon points="588.3,191.6 629.5,174.0 614.5,176.0 573.4,193.6" fill="#ffe6f1" fill-opacity="0.95"/><polygon points="476.1,348.5 468.1,342.9 456.2,337.2 463.3,342.7" fill="#b61980" stroke="#b61980" stroke-width="0.7"/><polygon points="456.2,337.2 448.4,331.8 438.9,327.1 445.9,332.3" fill="#cc128f" stroke="#cc128f" stroke-width="0.7"/><polygon points="666.5,371.5 671.9,372.4 701.6,356.3 694.8,354.1" fill="#2e5524" stroke="#2e5524" stroke-width="0.7"/><polygon points="816.8,276.3 815.4,292.4 826.9,280.8 831.9,260.5" fill="#00ba1f" stroke="#00ba1f" stroke-width="0.7"/><polygon points="598.7,401.8 589.5,398.3 565.5,389.0 574.1,393.1" fill="#472025" stroke="#472025" stroke-width="0.7"/><polygon points="543.6,380.5 534.8,375.7 515.7,367.7 523.8,372.9" fill="#77224c" stroke="#77224c" stroke-width="0.7"/><polygon points="831.9,260.5 826.9,280.8 834.8,269.8 844.0,244.7" fill="#00c61e" stroke="#00c61e" stroke-width="0.7"/><polygon points="630.3,388.5 633.8,388.4 660.6,370.9 654.2,370.6" fill="#3b3f21" stroke="#3b3f21" stroke-width="0.7"/><polygon points="550.2,208.7 588.3,191.6 573.4,193.6 535.7,210.6" fill="#ffdfed" fill-opacity="0.95"/><polygon points="694.8,354.1 701.6,356.3 729.3,340.2 722.1,336.3" fill="#336b23" stroke="#336b23" stroke-width="0.7"/><polygon points="598.7,401.8 604.7,399.2 601.9,392.9 589.5,398.3" fill="#40231c" stroke="#40231c" stroke-width="0.7"/><polygon points="395.6,307.9 398.4,300.1 392.7,299.9 392.2,307.1" fill="#ef1ca7" fill-opacity="0.95"/><polygon points="604.7,399.2 611.0,396.6 614.6,387.4 601.9,392.9" fill="#41291d" stroke="#41291d" stroke-width="0.7"/><polygon points="623.7,391.2 630.3,388.5 654.2,370.6 640.8,376.3" fill="#403c20" stroke="#403c20" stroke-width="0.7"/><polygon points="611.0,396.6 617.3,393.9 627.6,381.9 614.6,387.4" fill="#41301e" stroke="#41301e" stroke-width="0.7"/><polygon points="617.3,393.9 623.7,391.2 640.8,376.3 627.6,381.9" fill="#41361f" stroke="#41361f" stroke-width="0.7"/><polygon points="398.4,300.1 406.2,290.8 398.4,291.1 392.7,299.9" fill="#f532ac" fill-opacity="0.95"/><polygon points="515.7,367.7 506.8,362.3 490.5,354.9 498.6,360.5" fill="#96205d" stroke="#96205d" stroke-width="0.7"/><polygon points="431.2,322.4 422.8,318.0 416.4,314.9 423.9,318.7" fill="#eb0097" stroke="#eb0097" stroke-width="0.7"/><polygon points="660.6,370.9 666.5,371.5 694.8,354.1 687.2,352.4" fill="#405722" stroke="#405722" stroke-width="0.7"/><polygon points="406.2,290.8 418.8,280.1 409.2,280.9 398.4,291.1" fill="#fb4cb3" fill-opacity="0.95"/><polygon points="515.6,225.0 550.2,208.7 535.7,210.6 501.6,226.8" fill="#ffd1e6" fill-opacity="0.95"/><polygon points="490.5,354.9 481.6,349.3 468.1,342.9 476.1,348.5" fill="#b11c6e" stroke="#b11c6e" stroke-width="0.7"/><polygon points="448.4,331.8 439.7,326.7 431.2,322.4 438.9,327.1" fill="#dc0b8b" stroke="#dc0b8b" stroke-width="0.7"/><polygon points="418.8,280.1 436.2,268.1 425.2,269.2 409.2,280.9" fill="#fd6bbd" fill-opacity="0.95"/><polygon points="722.1,336.3 729.3,340.2 754.8,324.1 748.1,317.9" fill="#377f20" stroke="#377f20" stroke-width="0.7"/><polygon points="468.1,342.9 459.2,337.3 448.4,331.8 456.2,337.2" fill="#c8167d" stroke="#c8167d" stroke-width="0.7"/><polygon points="565.5,389.0 556.0,384.5 534.8,375.7 543.6,380.5" fill="#6c2338" stroke="#6c2338" stroke-width="0.7"/><polygon points="484.9,240.4 515.6,225.0 501.6,226.8 471.6,242.1" fill="#ffbede" fill-opacity="0.95"/><polygon points="436.2,268.1 458.3,254.8 446.0,256.3 425.2,269.2" fill="#ff8dca" fill-opacity="0.95"/><polygon points="458.3,254.8 484.9,240.4 471.6,242.1 446.0,256.3" fill="#ffa7d4" fill-opacity="0.95"/><polygon points="604.6,189.3 645.9,171.6 629.5,174.0 588.3,191.6" fill="#ffe6ed" fill-opacity="0.95"/><polygon points="748.1,317.9 754.8,324.1 778.0,308.1 772.8,298.8" fill="#3e931a" stroke="#3e931a" stroke-width="0.7"/><polygon points="534.8,375.7 525.0,370.5 506.8,362.3 515.7,367.7" fill="#8d224a" stroke="#8d224a" stroke-width="0.7"/><polygon points="654.2,370.6 660.6,370.9 687.2,352.4 678.6,351.1" fill="#4f571f" stroke="#4f571f" stroke-width="0.7"/><polygon points="687.2,352.4 694.8,354.1 722.1,336.3 713.7,332.8" fill="#4c6d1e" stroke="#4c6d1e" stroke-width="0.7"/><polygon points="589.5,398.3 579.3,394.3 556.0,384.5 565.5,389.0" fill="#5f2324" stroke="#5f2324" stroke-width="0.7"/><polygon points="772.8,298.8 778.0,308.1 798.7,292.2 796.0,279.1" fill="#47a50f" stroke="#47a50f" stroke-width="0.7"/><polygon points="399.3,309.2 404.6,300.6 398.4,300.1 395.6,307.9" fill="#f11c9e" fill-opacity="0.95"/><polygon points="566.2,206.5 604.6,189.3 588.3,191.6 550.2,208.7" fill="#ffdfe6" fill-opacity="0.95"/><polygon points="506.8,362.3 496.8,356.7 481.6,349.3 490.5,354.9" fill="#aa1f5b" stroke="#aa1f5b" stroke-width="0.7"/><polygon points="404.6,300.6 414.6,290.7 406.2,290.8 398.4,300.1" fill="#f636a2" fill-opacity="0.95"/><polygon points="459.2,337.3 449.5,331.8 439.7,326.7 448.4,331.8" fill="#d90f79" stroke="#d90f79" stroke-width="0.7"/><polygon points="481.6,349.3 471.7,343.6 459.2,337.3 468.1,342.9" fill="#c3196b" stroke="#c3196b" stroke-width="0.7"/><polygon points="589.5,398.3 601.9,392.9 598.3,385.9 579.3,394.3" fill="#59291a" stroke="#59291a" stroke-width="0.7"/><polygon points="640.8,376.3 654.2,370.6 678.6,351.1 658.0,360.0" fill="#57531d" stroke="#57531d" stroke-width="0.7"/><polygon points="601.9,392.9 614.6,387.4 617.8,377.4 598.3,385.9" fill="#5a341b" stroke="#5a341b" stroke-width="0.7"/><polygon points="414.6,290.7 429.2,279.5 418.8,280.1 406.2,290.8" fill="#fb50a8" fill-opacity="0.95"/><polygon points="627.6,381.9 640.8,376.3 658.0,360.0 637.7,368.8" fill="#59491d" stroke="#59491d" stroke-width="0.7"/><polygon points="796.0,279.1 798.7,292.2 816.8,276.3 817.5,258.5" fill="#53b600" stroke="#53b600" stroke-width="0.7"/><polygon points="614.6,387.4 627.6,381.9 637.7,368.8 617.8,377.4" fill="#5a3f1c" stroke="#5a3f1c" stroke-width="0.7"/><polygon points="531.0,222.9 566.2,206.5 550.2,208.7 515.6,225.0" fill="#ffd1de" fill-opacity="0.95"/><polygon points="429.2,279.5 448.3,267.0 436.2,268.1 418.8,280.1" fill="#fd6eb1" fill-opacity="0.95"/><polygon points="556.0,384.5 545.3,379.7 525.0,370.5 534.8,375.7" fill="#822437" stroke="#822437" stroke-width="0.7"/><polygon points="499.5,238.6 531.0,222.9 515.6,225.0 484.9,240.4" fill="#ffbfd4" fill-opacity="0.95"/><polygon points="448.3,267.0 471.8,253.3 458.3,254.8 436.2,268.1" fill="#ff90bd" fill-opacity="0.95"/><polygon points="713.7,332.8 722.1,336.3 748.1,317.9 739.9,311.8" fill="#5a8316" stroke="#5a8316" stroke-width="0.7"/><polygon points="471.8,253.3 499.5,238.6 484.9,240.4 458.3,254.8" fill="#ffa9c9" fill-opacity="0.95"/><polygon points="622.7,186.5 664.2,168.7 645.9,171.6 604.6,189.3" fill="#ffe6e6" fill-opacity="0.95"/><polygon points="817.5,258.5 816.8,276.3 831.9,260.5 837.1,237.0" fill="#61c500" stroke="#61c500" stroke-width="0.7"/><polygon points="525.0,370.5 514.0,365.0 496.8,356.7 506.8,362.3" fill="#a12248" stroke="#a12248" stroke-width="0.7"/><polygon points="678.6,351.1 687.2,352.4 713.7,332.8 703.9,329.7" fill="#626f18" stroke="#626f18" stroke-width="0.7"/><polygon points="496.8,356.7 485.8,350.9 471.7,343.6 481.6,349.3" fill="#bd1c58" stroke="#bd1c58" stroke-width="0.7"/><polygon points="837.1,237.0 831.9,260.5 844.0,244.7 854.6,214.4" fill="#72d300" stroke="#72d300" stroke-width="0.7"/><polygon points="403.4,310.9 411.5,301.5 404.6,300.6 399.3,309.2" fill="#f21f96" fill-opacity="0.95"/><polygon points="471.7,343.6 460.6,337.8 449.5,331.8 459.2,337.3" fill="#d51367" stroke="#d51367" stroke-width="0.7"/><polygon points="583.9,203.9 622.7,186.5 604.6,189.3 566.2,206.5" fill="#ffdedd" fill-opacity="0.95"/><polygon points="739.9,311.8 748.1,317.9 772.8,298.8 766.0,289.2" fill="#689702" stroke="#689702" stroke-width="0.7"/><polygon points="411.5,301.5 424.0,290.9 414.6,290.7 404.6,300.6" fill="#f83997" fill-opacity="0.95"/><polygon points="424.0,290.9 440.7,279.0 429.2,279.5 414.6,290.7" fill="#fb529c" fill-opacity="0.95"/><polygon points="658.0,360.0 678.6,351.1 703.9,329.7 675.6,342.0" fill="#6e6914" stroke="#6e6914" stroke-width="0.7"/><polygon points="548.1,220.6 583.9,203.9 566.2,206.5 531.0,222.9" fill="#ffd0d2" fill-opacity="0.95"/><polygon points="579.3,394.3 598.3,385.9 593.8,378.2 567.8,389.9" fill="#702f18" stroke="#702f18" stroke-width="0.7"/><polygon points="637.7,368.8 658.0,360.0 675.6,342.0 647.7,354.3" fill="#715b16" stroke="#715b16" stroke-width="0.7"/><polygon points="440.7,279.0 461.7,265.9 448.3,267.0 429.2,279.5" fill="#fd6fa4" fill-opacity="0.95"/><polygon points="545.3,379.7 533.3,374.4 514.0,365.0 525.0,370.5" fill="#982434" stroke="#982434" stroke-width="0.7"/><polygon points="598.3,385.9 617.8,377.4 620.4,366.3 593.8,378.2" fill="#723f18" stroke="#723f18" stroke-width="0.7"/><polygon points="617.8,377.4 637.7,368.8 647.7,354.3 620.4,366.3" fill="#724d17" stroke="#724d17" stroke-width="0.7"/><polygon points="515.6,236.6 548.1,220.6 531.0,222.9 499.5,238.6" fill="#ffbec7" fill-opacity="0.95"/><polygon points="461.7,265.9 486.7,251.7 471.8,253.3 448.3,267.0" fill="#ff90af" fill-opacity="0.95"/><polygon points="642.9,183.3 684.6,165.3 664.2,168.7 622.7,186.5" fill="#ffe6d0" fill-opacity="0.95"/><polygon points="486.7,251.7 515.6,236.6 499.5,238.6 471.8,253.3" fill="#ffa8bb" fill-opacity="0.95"/><polygon points="766.0,289.2 772.8,298.8 796.0,279.1 791.8,264.8" fill="#78ab00" stroke="#78ab00" stroke-width="0.7"/><polygon points="703.9,329.7 713.7,332.8 739.9,311.8 729.9,305.9" fill="#758504" stroke="#758504" stroke-width="0.7"/><polygon points="514.0,365.0 501.7,359.1 485.8,350.9 496.8,356.7" fill="#b61f45" stroke="#b61f45" stroke-width="0.7"/><polygon points="407.9,313.2 419.1,302.8 411.5,301.5 403.4,310.9" fill="#f3208c" fill-opacity="0.95"/><polygon points="603.6,200.9 642.9,183.3 622.7,186.5 583.9,203.9" fill="#ffd9c5" fill-opacity="0.95"/><polygon points="791.8,264.8 796.0,279.1 817.5,258.5 817.4,238.1" fill="#89bd00" stroke="#89bd00" stroke-width="0.7"/><polygon points="419.1,302.8 434.3,291.3 424.0,290.9 411.5,301.5" fill="#f8398b" fill-opacity="0.95"/><polygon points="434.3,291.3 453.5,278.6 440.7,279.0 424.0,290.9" fill="#fb508d" fill-opacity="0.95"/><polygon points="567.0,218.0 603.6,200.9 583.9,203.9 548.1,220.6" fill="#ffc9ba" fill-opacity="0.95"/><polygon points="675.6,342.0 703.9,329.7 729.9,305.9 693.5,322.1" fill="#857d00" stroke="#857d00" stroke-width="0.7"/><polygon points="729.9,305.9 739.9,311.8 766.0,289.2 757.1,279.2" fill="#8a9a00" stroke="#8a9a00" stroke-width="0.7"/><polygon points="453.5,278.6 476.5,264.8 461.7,265.9 440.7,279.0" fill="#fd6b92" fill-opacity="0.95"/><polygon points="665.6,179.5 707.6,161.1 684.6,165.3 642.9,183.3" fill="#ffe5ae" fill-opacity="0.95"/><polygon points="567.8,389.9 593.8,378.2 588.1,369.6 554.8,384.9" fill="#883313" stroke="#883313" stroke-width="0.7"/><polygon points="533.5,234.4 567.0,218.0 548.1,220.6 515.6,236.6" fill="#ffb6af" fill-opacity="0.95"/><polygon points="647.7,354.3 675.6,342.0 693.5,322.1 657.6,338.1" fill="#896c06" stroke="#896c06" stroke-width="0.7"/><polygon points="476.5,264.8 503.2,250.0 486.7,251.7 461.7,265.9" fill="#ff8a99" fill-opacity="0.95"/><polygon points="817.4,238.1 817.5,258.5 837.1,237.0 842.6,208.7" fill="#9bce00" stroke="#9bce00" stroke-width="0.7"/><polygon points="503.2,250.0 533.5,234.4 515.6,236.6 486.7,251.7" fill="#ffa1a4" fill-opacity="0.95"/><polygon points="593.8,378.2 620.4,366.3 622.4,354.0 588.1,369.6" fill="#8a4811" stroke="#8a4811" stroke-width="0.7"/><polygon points="620.4,366.3 647.7,354.3 657.6,338.1 622.4,354.0" fill="#8a5b0d" stroke="#8a5b0d" stroke-width="0.7"/><polygon points="413.1,316.0 427.6,304.6 419.1,302.8 407.9,313.2" fill="#f32181" fill-opacity="0.95"/><polygon points="625.6,197.4 665.6,179.5 642.9,183.3 603.6,200.9" fill="#ffd5a5" fill-opacity="0.95"/><polygon points="842.6,208.7 837.1,237.0 854.6,214.4 867.6,176.0" fill="#afdd00" stroke="#afdd00" stroke-width="0.7"/><polygon points="427.6,304.6 445.8,292.0 434.3,291.3 419.1,302.8" fill="#f9387e" fill-opacity="0.95"/><polygon points="757.1,279.2 766.0,289.2 791.8,264.8 785.7,248.8" fill="#9fae00" stroke="#9fae00" stroke-width="0.7"/><polygon points="588.2,215.0 625.6,197.4 603.6,200.9 567.0,218.0" fill="#ffc39b" fill-opacity="0.95"/><polygon points="445.8,292.0 467.6,278.3 453.5,278.6 434.3,291.3" fill="#fb4e7d" fill-opacity="0.95"/><polygon points="693.5,322.1 729.9,305.9 757.1,279.2 711.8,299.6" fill="#9c9100" stroke="#9c9100" stroke-width="0.7"/><polygon points="691.1,174.9 733.6,156.2 707.6,161.1 665.6,179.5" fill="#ffe581" fill-opacity="0.95"/><polygon points="467.6,278.3 492.9,263.7 476.5,264.8 453.5,278.6" fill="#fd687d" fill-opacity="0.95"/><polygon points="553.4,231.9 588.2,215.0 567.0,218.0 533.5,234.4" fill="#ffaf92" fill-opacity="0.95"/><polygon points="492.9,263.7 521.5,248.2 503.2,250.0 476.5,264.8" fill="#ff8480" fill-opacity="0.95"/><polygon points="521.5,248.2 553.4,231.9 533.5,234.4 503.2,250.0" fill="#ff9a89" fill-opacity="0.95"/><polygon points="554.8,384.9 588.1,369.6 580.9,359.8 539.9,379.1" fill="#a0350c" stroke="#a0350c" stroke-width="0.7"/><polygon points="657.6,338.1 693.5,322.1 711.8,299.6 667.1,319.9" fill="#a17d00" stroke="#a17d00" stroke-width="0.7"/><polygon points="588.1,369.6 622.4,354.0 623.4,340.1 580.9,359.8" fill="#a35003" stroke="#a35003" stroke-width="0.7"/><polygon points="622.4,354.0 657.6,338.1 667.1,319.9 623.4,340.1" fill="#a36700" stroke="#a36700" stroke-width="0.7"/><polygon points="650.5,193.4 691.1,174.9 665.6,179.5 625.6,197.4" fill="#ffd17b" fill-opacity="0.95"/><polygon points="785.7,248.8 791.8,264.8 817.4,238.1 816.1,213.9" fill="#b4c100" stroke="#b4c100" stroke-width="0.7"/><polygon points="418.8,319.7 437.1,306.8 427.6,304.6 413.1,316.0" fill="#f42177" fill-opacity="0.95"/><polygon points="437.1,306.8 458.6,293.0 445.8,292.0 427.6,304.6" fill="#f93870" fill-opacity="0.95"/><polygon points="611.9,211.5 650.5,193.4 625.6,197.4 588.2,215.0" fill="#ffbd75" fill-opacity="0.95"/><polygon points="720.2,169.5 763.2,150.3 733.6,156.2 691.1,174.9" fill="#ffe646" stroke="#ffe646" stroke-width="0.7"/><polygon points="711.8,299.6 757.1,279.2 785.7,248.8 730.7,274.1" fill="#b4a400" stroke="#b4a400" stroke-width="0.7"/><polygon points="458.6,293.0 483.4,278.3 467.6,278.3 445.8,292.0" fill="#fb4d6b" fill-opacity="0.95"/><polygon points="575.7,229.2 611.9,211.5 588.2,215.0 553.4,231.9" fill="#ffa86f" fill-opacity="0.95"/><polygon points="483.4,278.3 511.3,262.7 492.9,263.7 467.6,278.3" fill="#fd6466" fill-opacity="0.95"/><polygon points="542.1,246.3 575.7,229.2 553.4,231.9 521.5,248.2" fill="#ff9469" fill-opacity="0.95"/><polygon points="511.3,262.7 542.1,246.3 521.5,248.2 492.9,263.7" fill="#ff7f64" fill-opacity="0.95"/><polygon points="816.1,213.9 817.4,238.1 842.6,208.7 848.7,172.9" fill="#cbd300" stroke="#cbd300" stroke-width="0.7"/><polygon points="667.1,319.9 711.8,299.6 730.7,274.1 676.4,299.2" fill="#ba8c00" stroke="#ba8c00" stroke-width="0.7"/><polygon points="539.9,379.1 580.9,359.8 572.1,348.7 522.8,372.5" fill="#b83700" stroke="#b83700" stroke-width="0.7"/><polygon points="678.7,188.7 720.2,169.5 691.1,174.9 650.5,193.4" fill="#ffd246" stroke="#ffd246" stroke-width="0.7"/><polygon points="425.3,324.2 447.7,309.8 437.1,306.8 418.8,319.7" fill="#f00c65" stroke="#f00c65" stroke-width="0.7"/><polygon points="623.4,340.1 667.1,319.9 676.4,299.2 623.4,324.2" fill="#bc7300" stroke="#bc7300" stroke-width="0.7"/><polygon points="580.9,359.8 623.4,340.1 623.4,324.2 572.1,348.7" fill="#bb5800" stroke="#bb5800" stroke-width="0.7"/><polygon points="753.7,163.1 797.4,143.1 763.2,150.3 720.2,169.5" fill="#ffe605" stroke="#ffe605" stroke-width="0.7"/><polygon points="447.7,309.8 473.1,294.5 458.6,293.0 437.1,306.8" fill="#f62e58" stroke="#f62e58" stroke-width="0.7"/><polygon points="638.9,207.6 678.7,188.7 650.5,193.4 611.9,211.5" fill="#ffbe47" stroke="#ffbe47" stroke-width="0.7"/><polygon points="730.7,274.1 785.7,248.8 816.1,213.9 750.2,244.6" fill="#cdb600" stroke="#cdb600" stroke-width="0.7"/><polygon points="848.7,172.9 842.6,208.7 867.6,176.0 884.4,123.9" fill="#e3e400" stroke="#e3e400" stroke-width="0.7"/><polygon points="473.1,294.5 501.2,278.4 483.4,278.3 458.6,293.0" fill="#fc4d4b" stroke="#fc4d4b" stroke-width="0.7"/><polygon points="601.0,226.1 638.9,207.6 611.9,211.5 575.7,229.2" fill="#ffa947" stroke="#ffa947" stroke-width="0.7"/><polygon points="501.2,278.4 532.0,261.6 511.3,262.7 483.4,278.3" fill="#ff6a45" stroke="#ff6a45" stroke-width="0.7"/><polygon points="565.3,244.1 601.0,226.1 575.7,229.2 542.1,246.3" fill="#ff9546" stroke="#ff9546" stroke-width="0.7"/><polygon points="532.0,261.6 565.3,244.1 542.1,246.3 511.3,262.7" fill="#ff8046" stroke="#ff8046" stroke-width="0.7"/><polygon points="711.1,183.1 753.7,163.1 720.2,169.5 678.7,188.7" fill="#ffd314" stroke="#ffd314" stroke-width="0.7"/><polygon points="676.4,299.2 730.7,274.1 750.2,244.6 685.4,275.3" fill="#d39b00" stroke="#d39b00" stroke-width="0.7"/><polygon points="522.8,372.5 572.1,348.7 561.1,335.8 502.8,364.8" fill="#d03700" stroke="#d03700" stroke-width="0.7"/><polygon points="432.6,329.7 459.8,313.5 447.7,309.8 425.3,324.2" fill="#f5094e" stroke="#f5094e" stroke-width="0.7"/><polygon points="792.6,155.5 837.3,134.5 797.4,143.1 753.7,163.1" fill="#ffe600" stroke="#ffe600" stroke-width="0.7"/><polygon points="623.4,324.2 676.4,299.2 685.4,275.3 622.1,305.8" fill="#d57e00" stroke="#d57e00" stroke-width="0.7"/><polygon points="669.7,203.0 711.1,183.1 678.7,188.7 638.9,207.6" fill="#ffbf1c" stroke="#ffbf1c" stroke-width="0.7"/><polygon points="750.2,244.6 816.1,213.9 848.7,172.9 770.7,210.0" fill="#e6c600" stroke="#e6c600" stroke-width="0.7"/><polygon points="572.1,348.7 623.4,324.2 622.1,305.8 561.1,335.8" fill="#d45e00" stroke="#d45e00" stroke-width="0.7"/><polygon points="459.8,313.5 489.4,296.5 473.1,294.5 447.7,309.8" fill="#f93341" stroke="#f93341" stroke-width="0.7"/><polygon points="629.9,222.5 669.7,203.0 638.9,207.6 601.0,226.1" fill="#ffac21" stroke="#ffac21" stroke-width="0.7"/><polygon points="489.4,296.5 521.4,278.8 501.2,278.4 473.1,294.5" fill="#fd5233" stroke="#fd5233" stroke-width="0.7"/><polygon points="748.5,176.5 792.6,155.5 753.7,163.1 711.1,183.1" fill="#ffd400" stroke="#ffd400" stroke-width="0.7"/><polygon points="591.8,241.8 629.9,222.5 601.0,226.1 565.3,244.1" fill="#ff9825" stroke="#ff9825" stroke-width="0.7"/><polygon points="521.4,278.8 555.5,260.6 532.0,261.6 501.2,278.4" fill="#ff6e2b" stroke="#ff6e2b" stroke-width="0.7"/><polygon points="555.5,260.6 591.8,241.8 565.3,244.1 532.0,261.6" fill="#ff8328" stroke="#ff8328" stroke-width="0.7"/><polygon points="838.3,146.1 884.4,123.9 837.3,134.5 792.6,155.5" fill="#ffe600" stroke="#ffe600" stroke-width="0.7"/><polygon points="685.4,275.3 750.2,244.6 770.7,210.0 693.8,247.3" fill="#eca800" stroke="#eca800" stroke-width="0.7"/><polygon points="770.7,210.0 848.7,172.9 884.4,123.9 792.4,168.6" fill="#ffd600" stroke="#ffd600" stroke-width="0.7"/><polygon points="705.3,197.6 748.5,176.5 711.1,183.1 669.7,203.0" fill="#ffc100" stroke="#ffc100" stroke-width="0.7"/><polygon points="441.1,336.5 473.7,318.1 459.8,313.5 432.6,329.7" fill="#f9052d" stroke="#f9052d" stroke-width="0.7"/><polygon points="502.8,364.8 561.1,335.8 547.2,320.6 479.2,355.7" fill="#e83500" stroke="#e83500" stroke-width="0.7"/><polygon points="622.1,305.8 685.4,275.3 693.8,247.3 619.1,284.3" fill="#ee8800" stroke="#ee8800" stroke-width="0.7"/><polygon points="473.7,318.1 508.2,299.1 489.4,296.5 459.8,313.5" fill="#fb391d" stroke="#fb391d" stroke-width="0.7"/><polygon points="561.1,335.8 622.1,305.8 619.1,284.3 547.2,320.6" fill="#ed6400" stroke="#ed6400" stroke-width="0.7"/><polygon points="792.4,168.6 838.3,146.1 792.6,155.5 748.5,176.5" fill="#ffd500" stroke="#ffd500" stroke-width="0.7"/><polygon points="663.1,218.5 705.3,197.6 669.7,203.0 629.9,222.5" fill="#ffae00" stroke="#ffae00" stroke-width="0.7"/><polygon points="508.2,299.1 544.5,279.6 521.4,278.8 489.4,296.5" fill="#fe5707" stroke="#fe5707" stroke-width="0.7"/><polygon points="622.1,239.2 663.1,218.5 629.9,222.5 591.8,241.8" fill="#ff9b00" stroke="#ff9b00" stroke-width="0.7"/><polygon points="544.5,279.6 582.5,259.6 555.5,260.6 521.4,278.8" fill="#ff7100" stroke="#ff7100" stroke-width="0.7"/><polygon points="582.5,259.6 622.1,239.2 591.8,241.8 555.5,260.6" fill="#ff8700" stroke="#ff8700" stroke-width="0.7"/><polygon points="746.8,191.2 792.4,168.6 748.5,176.5 705.3,197.6" fill="#ffc300" stroke="#ffc300" stroke-width="0.7"/><polygon points="693.8,247.3 770.7,210.0 792.4,168.6 701.7,213.7" fill="#ffb500" stroke="#ffb500" stroke-width="0.7"/><polygon points="450.9,344.8 489.6,323.9 473.7,318.1 441.1,336.5" fill="#fd0409" stroke="#fd0409" stroke-width="0.7"/><polygon points="479.2,355.7 547.2,320.6 529.8,302.5 450.9,344.8" fill="#ff3100" stroke="#ff3100" stroke-width="0.7"/><polygon points="701.7,213.7 746.8,191.2 705.3,197.6 663.1,218.5" fill="#ffb100" stroke="#ffb100" stroke-width="0.7"/><polygon points="489.6,323.9 529.8,302.5 508.2,299.1 473.7,318.1" fill="#fe3e06" stroke="#fe3e06" stroke-width="0.7"/><polygon points="619.1,284.3 693.8,247.3 701.7,213.7 613.7,258.6" fill="#ff9100" stroke="#ff9100" stroke-width="0.7"/><polygon points="657.3,236.3 701.7,213.7 663.1,218.5 622.1,239.2" fill="#ff9e00" stroke="#ff9e00" stroke-width="0.7"/><polygon points="547.2,320.6 619.1,284.3 613.7,258.6 529.8,302.5" fill="#ff6900" stroke="#ff6900" stroke-width="0.7"/><polygon points="529.8,302.5 571.2,280.7 544.5,279.6 508.2,299.1" fill="#ff5c02" stroke="#ff5c02" stroke-width="0.7"/><polygon points="613.7,258.6 657.3,236.3 622.1,239.2 582.5,259.6" fill="#ff8a00" stroke="#ff8a00" stroke-width="0.7"/><polygon points="571.2,280.7 613.7,258.6 582.5,259.6 544.5,279.6" fill="#ff7500" stroke="#ff7500" stroke-width="0.7"/>
<linearGradient id="skg" gradientUnits="userSpaceOnUse" x1="400" y1="300" x2="600" y2="400"><stop offset="0" stop-color="#e0208e"/><stop offset="0.3" stop-color="#a020b8"/><stop offset="0.6" stop-color="#4a24c0"/><stop offset="1" stop-color="#2a1850"/></linearGradient>
<path d="M392.5 307L415.6 317.5L434 335.9L441.6 351.2L453.8 357.3L476.7 364.9L522.6 375.6L560 389L600 401L588 395L545 377L505 355L472 335L446 318L420 306L400 300Z" fill="url(#skg)" fill-opacity="0.85"/>
<path d="M451.0 355.9L447.4 348.7M447.4 348.7L439.4 346.0M439.4 346.0L442.7 353.5M442.7 353.5L451.0 355.9M461.0 358.9L457.0 352.0M457.0 352.0L447.4 348.7M451.0 355.9L461.0 358.9M447.4 348.7L443.4 342.0M443.4 342.0L435.8 339.1M435.8 339.1L439.4 346.0M472.7 362.4L468.3 355.9M468.3 355.9L457.0 352.0M461.0 358.9L472.7 362.4M457.0 352.0L452.6 345.5M452.6 345.5L443.4 342.0M443.4 342.0L439.1 335.7M439.1 335.7L431.8 332.7M431.8 332.7L435.8 339.1M486.2 366.6L481.2 360.4M481.2 360.4L468.3 355.9M472.7 362.4L486.2 366.6M468.3 355.9L463.4 349.6M463.4 349.6L452.6 345.5M439.1 335.7L434.4 329.8M434.4 329.8L427.5 326.8M427.5 326.8L431.8 332.7M452.6 345.5L447.8 339.3M447.8 339.3L439.1 335.7M501.5 371.3L496.0 365.6M496.0 365.6L481.2 360.4M486.2 366.6L501.5 371.3M481.2 360.4L475.8 354.4M475.8 354.4L463.4 349.6M434.4 329.8L429.3 324.5M429.3 324.5L422.8 321.6M422.8 321.6L427.5 326.8M463.4 349.6L458.0 343.6M458.0 343.6L447.8 339.3M447.8 339.3L442.6 333.5M442.6 333.5L434.4 329.8M518.7 376.7L512.6 371.4M512.6 371.4L496.0 365.6M501.5 371.3L518.7 376.7M496.0 365.6L489.9 359.8M489.9 359.8L475.8 354.4M429.3 324.5L423.7 319.8M423.7 319.8L417.7 317.0M417.7 317.0L422.8 321.6M475.8 354.4L469.8 348.5M469.8 348.5L458.0 343.6M442.6 333.5L436.9 328.1M436.9 328.1L429.3 324.5M458.0 343.6L452.2 337.8M452.2 337.8L442.6 333.5M537.8 382.8L531.1 377.9M531.1 377.9L512.6 371.4M518.7 376.7L537.8 382.8M512.6 371.4L505.9 366.0M505.9 366.0L489.9 359.8M815.4 292.4L813.6 307.1M813.6 307.1L822.1 298.8M822.1 298.8L826.9 280.8M826.9 280.8L815.4 292.4M822.1 298.8L826.7 291.5M826.7 291.5L834.8 269.8M834.8 269.8L826.9 280.8M423.7 319.8L417.5 315.7M417.5 315.7L412.1 313.2M412.1 313.2L417.7 317.0M800.4 304.5L801.2 316.2M801.2 316.2L813.6 307.1M815.4 292.4L800.4 304.5M558.8 389.5L551.6 385.1M551.6 385.1L531.1 377.9M537.8 382.8L558.8 389.5M781.9 317.2L784.9 326.2M784.9 326.2L801.2 316.2M800.4 304.5L781.9 317.2M489.9 359.8L483.3 354.1M483.3 354.1L469.8 348.5M436.9 328.1L430.7 323.1M430.7 323.1L423.7 319.8M760.3 330.5L764.8 337.1M764.8 337.1L784.9 326.2M781.9 317.2L760.3 330.5M469.8 348.5L463.3 342.7M463.3 342.7L452.2 337.8M452.2 337.8L445.9 332.3M445.9 332.3L436.9 328.1M735.5 344.4L740.8 348.9M740.8 348.9L764.8 337.1M760.3 330.5L735.5 344.4M531.1 377.9L523.8 372.9M523.8 372.9L505.9 366.0M581.9 396.9L574.1 393.1M574.1 393.1L551.6 385.1M558.8 389.5L581.9 396.9M707.7 358.7L713.0 361.6M713.0 361.6L740.8 348.9M735.5 344.4L707.7 358.7M606.9 404.9L606.9 404.9M606.9 404.9L646.1 389.6M646.1 389.6L643.3 389.0M643.3 389.0L606.9 404.9M676.9 373.6L681.4 375.1M681.4 375.1L713.0 361.6M707.7 358.7L676.9 373.6M417.5 315.7L410.8 312.3M410.8 312.3L406.0 310.2M406.0 310.2L412.1 313.2M646.1 389.6L681.4 375.1M676.9 373.6L643.3 389.0M643.3 389.0L640.3 388.6M640.3 388.6L606.9 404.9M505.9 366.0L498.6 360.5M498.6 360.5L483.3 354.1M640.3 388.6L637.2 388.4M637.2 388.4L606.9 404.9M430.7 323.1L423.9 318.7M423.9 318.7L417.5 315.7M606.9 404.9L598.7 401.8M598.7 401.8L574.1 393.1M581.9 396.9L606.9 404.9M637.2 388.4L633.8 388.4M633.8 388.4L606.9 404.9M483.3 354.1L476.1 348.5M476.1 348.5L463.3 342.7M445.9 332.3L438.9 327.1M438.9 327.1L430.7 323.1M676.9 373.6L671.9 372.4M671.9 372.4L640.3 388.6M463.3 342.7L456.2 337.2M456.2 337.2L445.9 332.3M633.8 388.4L630.3 388.5M630.3 388.5L606.9 404.9M551.6 385.1L543.6 380.5M543.6 380.5L523.8 372.9M606.9 404.9L604.7 399.2M604.7 399.2L598.7 401.8M606.9 404.9L611.0 396.6M611.0 396.6L604.7 399.2M606.9 404.9L617.3 393.9M617.3 393.9L611.0 396.6M606.9 404.9L623.7 391.2M623.7 391.2L617.3 393.9M630.3 388.5L623.7 391.2M707.7 358.7L701.6 356.3M701.6 356.3L671.9 372.4M671.9 372.4L666.5 371.5M666.5 371.5L637.2 388.4M735.5 344.4L729.3 340.2M729.3 340.2L701.6 356.3M523.8 372.9L515.7 367.7M515.7 367.7L498.6 360.5M760.3 330.5L754.8 324.1M754.8 324.1L729.3 340.2M423.9 318.7L416.4 314.9M416.4 314.9L410.8 312.3M781.9 317.2L778.0 308.1M778.0 308.1L754.8 324.1M574.1 393.1L565.5 389.0M565.5 389.0L543.6 380.5M800.4 304.5L798.7 292.2M798.7 292.2L778.0 308.1M498.6 360.5L490.5 354.9M490.5 354.9L476.1 348.5M438.9 327.1L431.2 322.4M431.2 322.4L423.9 318.7M666.5 371.5L660.6 370.9M660.6 370.9L633.8 388.4M815.4 292.4L816.8 276.3M816.8 276.3L798.7 292.2M476.1 348.5L468.1 342.9M468.1 342.9L456.2 337.2M456.2 337.2L448.4 331.8M448.4 331.8L438.9 327.1M701.6 356.3L694.8 354.1M694.8 354.1L666.5 371.5M826.9 280.8L831.9 260.5M831.9 260.5L816.8 276.3M598.7 401.8L589.5 398.3M589.5 398.3L565.5 389.0M543.6 380.5L534.8 375.7M534.8 375.7L515.7 367.7M834.8 269.8L844.0 244.7M844.0 244.7L831.9 260.5M660.6 370.9L654.2 370.6M654.2 370.6L630.3 388.5M729.3 340.2L722.1 336.3M722.1 336.3L694.8 354.1M604.7 399.2L601.9 392.9M601.9 392.9L589.5 398.3M611.0 396.6L614.6 387.4M614.6 387.4L601.9 392.9M654.2 370.6L640.8 376.3M640.8 376.3L623.7 391.2M617.3 393.9L627.6 381.9M627.6 381.9L614.6 387.4M640.8 376.3L627.6 381.9M515.7 367.7L506.8 362.3M506.8 362.3L490.5 354.9M431.2 322.4L422.8 318.0M422.8 318.0L416.4 314.9M694.8 354.1L687.2 352.4M687.2 352.4L660.6 370.9M490.5 354.9L481.6 349.3M481.6 349.3L468.1 342.9M448.4 331.8L439.7 326.7M439.7 326.7L431.2 322.4M754.8 324.1L748.1 317.9M748.1 317.9L722.1 336.3M468.1 342.9L459.2 337.3M459.2 337.3L448.4 331.8M565.5 389.0L556.0 384.5M556.0 384.5L534.8 375.7M778.0 308.1L772.8 298.8M772.8 298.8L748.1 317.9M534.8 375.7L525.0 370.5M525.0 370.5L506.8 362.3M687.2 352.4L678.6 351.1M678.6 351.1L654.2 370.6M722.1 336.3L713.7 332.8M713.7 332.8L687.2 352.4M589.5 398.3L579.3 394.3M579.3 394.3L556.0 384.5M798.7 292.2L796.0 279.1M796.0 279.1L772.8 298.8M506.8 362.3L496.8 356.7M496.8 356.7L481.6 349.3M459.2 337.3L449.5 331.8M449.5 331.8L439.7 326.7M481.6 349.3L471.7 343.6M471.7 343.6L459.2 337.3M601.9 392.9L598.3 385.9M598.3 385.9L579.3 394.3M678.6 351.1L658.0 360.0M658.0 360.0L640.8 376.3M614.6 387.4L617.8 377.4M617.8 377.4L598.3 385.9M658.0 360.0L637.7 368.8M637.7 368.8L627.6 381.9M816.8 276.3L817.5 258.5M817.5 258.5L796.0 279.1M637.7 368.8L617.8 377.4M556.0 384.5L545.3 379.7M545.3 379.7L525.0 370.5M748.1 317.9L739.9 311.8M739.9 311.8L713.7 332.8M831.9 260.5L837.1 237.0M837.1 237.0L817.5 258.5M525.0 370.5L514.0 365.0M514.0 365.0L496.8 356.7M713.7 332.8L703.9 329.7M703.9 329.7L678.6 351.1M496.8 356.7L485.8 350.9M485.8 350.9L471.7 343.6M844.0 244.7L854.6 214.4M854.6 214.4L837.1 237.0M471.7 343.6L460.6 337.8M460.6 337.8L449.5 331.8M772.8 298.8L766.0 289.2M766.0 289.2L739.9 311.8M703.9 329.7L675.6 342.0M675.6 342.0L658.0 360.0M598.3 385.9L593.8 378.2M593.8 378.2L567.8 389.9M567.8 389.9L579.3 394.3M675.6 342.0L647.7 354.3M647.7 354.3L637.7 368.8M545.3 379.7L533.3 374.4M533.3 374.4L514.0 365.0M617.8 377.4L620.4 366.3M620.4 366.3L593.8 378.2M647.7 354.3L620.4 366.3M796.0 279.1L791.8 264.8M791.8 264.8L766.0 289.2M739.9 311.8L729.9 305.9M729.9 305.9L703.9 329.7M514.0 365.0L501.7 359.1M501.7 359.1L485.8 350.9M817.5 258.5L817.4 238.1M817.4 238.1L791.8 264.8M729.9 305.9L693.5 322.1M693.5 322.1L675.6 342.0M766.0 289.2L757.1 279.2M757.1 279.2L729.9 305.9M593.8 378.2L588.1 369.6M588.1 369.6L554.8 384.9M554.8 384.9L567.8 389.9M693.5 322.1L657.6 338.1M657.6 338.1L647.7 354.3M837.1 237.0L842.6 208.7M842.6 208.7L817.4 238.1M620.4 366.3L622.4 354.0M622.4 354.0L588.1 369.6M657.6 338.1L622.4 354.0M854.6 214.4L867.6 176.0M867.6 176.0L842.6 208.7M791.8 264.8L785.7 248.8M785.7 248.8L757.1 279.2M757.1 279.2L711.8 299.6M711.8 299.6L693.5 322.1M588.1 369.6L580.9 359.8M580.9 359.8L539.9 379.1M539.9 379.1L554.8 384.9M711.8 299.6L667.1 319.9M667.1 319.9L657.6 338.1M622.4 354.0L623.4 340.1M623.4 340.1L580.9 359.8M667.1 319.9L623.4 340.1M817.4 238.1L816.1 213.9M816.1 213.9L785.7 248.8M720.2 169.5L763.2 150.3M763.2 150.3L733.6 156.2M733.6 156.2L691.1 174.9M691.1 174.9L720.2 169.5M785.7 248.8L730.7 274.1M730.7 274.1L711.8 299.6M842.6 208.7L848.7 172.9M848.7 172.9L816.1 213.9M730.7 274.1L676.4 299.2M676.4 299.2L667.1 319.9M580.9 359.8L572.1 348.7M572.1 348.7L522.8 372.5M522.8 372.5L539.9 379.1M678.7 188.7L720.2 169.5M691.1 174.9L650.5 193.4M650.5 193.4L678.7 188.7M425.3 324.2L447.7 309.8M447.7 309.8L437.1 306.8M437.1 306.8L418.8 319.7M418.8 319.7L425.3 324.2M676.4 299.2L623.4 324.2M623.4 324.2L623.4 340.1M623.4 324.2L572.1 348.7M753.7 163.1L797.4 143.1M797.4 143.1L763.2 150.3M720.2 169.5L753.7 163.1M447.7 309.8L473.1 294.5M473.1 294.5L458.6 293.0M458.6 293.0L437.1 306.8M638.9 207.6L678.7 188.7M650.5 193.4L611.9 211.5M611.9 211.5L638.9 207.6M816.1 213.9L750.2 244.6M750.2 244.6L730.7 274.1M867.6 176.0L884.4 123.9M884.4 123.9L848.7 172.9M473.1 294.5L501.2 278.4M501.2 278.4L483.4 278.3M483.4 278.3L458.6 293.0M601.0 226.1L638.9 207.6M611.9 211.5L575.7 229.2M575.7 229.2L601.0 226.1M501.2 278.4L532.0 261.6M532.0 261.6L511.3 262.7M511.3 262.7L483.4 278.3M565.3 244.1L601.0 226.1M575.7 229.2L542.1 246.3M542.1 246.3L565.3 244.1M532.0 261.6L565.3 244.1M542.1 246.3L511.3 262.7M711.1 183.1L753.7 163.1M678.7 188.7L711.1 183.1M750.2 244.6L685.4 275.3M685.4 275.3L676.4 299.2M572.1 348.7L561.1 335.8M561.1 335.8L502.8 364.8M502.8 364.8L522.8 372.5M432.6 329.7L459.8 313.5M459.8 313.5L447.7 309.8M425.3 324.2L432.6 329.7M792.6 155.5L837.3 134.5M837.3 134.5L797.4 143.1M753.7 163.1L792.6 155.5M685.4 275.3L622.1 305.8M622.1 305.8L623.4 324.2M669.7 203.0L711.1 183.1M638.9 207.6L669.7 203.0M848.7 172.9L770.7 210.0M770.7 210.0L750.2 244.6M622.1 305.8L561.1 335.8M459.8 313.5L489.4 296.5M489.4 296.5L473.1 294.5M629.9 222.5L669.7 203.0M601.0 226.1L629.9 222.5M489.4 296.5L521.4 278.8M521.4 278.8L501.2 278.4M748.5 176.5L792.6 155.5M711.1 183.1L748.5 176.5M591.8 241.8L629.9 222.5M565.3 244.1L591.8 241.8M521.4 278.8L555.5 260.6M555.5 260.6L532.0 261.6M555.5 260.6L591.8 241.8M838.3 146.1L884.4 123.9M884.4 123.9L837.3 134.5M792.6 155.5L838.3 146.1M770.7 210.0L693.8 247.3M693.8 247.3L685.4 275.3M884.4 123.9L792.4 168.6M792.4 168.6L770.7 210.0M705.3 197.6L748.5 176.5M669.7 203.0L705.3 197.6M441.1 336.5L473.7 318.1M473.7 318.1L459.8 313.5M432.6 329.7L441.1 336.5M561.1 335.8L547.2 320.6M547.2 320.6L479.2 355.7M479.2 355.7L502.8 364.8M693.8 247.3L619.1 284.3M619.1 284.3L622.1 305.8M473.7 318.1L508.2 299.1M508.2 299.1L489.4 296.5M619.1 284.3L547.2 320.6M792.4 168.6L838.3 146.1M748.5 176.5L792.4 168.6M663.1 218.5L705.3 197.6M629.9 222.5L663.1 218.5M508.2 299.1L544.5 279.6M544.5 279.6L521.4 278.8M622.1 239.2L663.1 218.5M591.8 241.8L622.1 239.2M544.5 279.6L582.5 259.6M582.5 259.6L555.5 260.6M582.5 259.6L622.1 239.2M746.8 191.2L792.4 168.6M705.3 197.6L746.8 191.2M792.4 168.6L701.7 213.7M701.7 213.7L693.8 247.3M450.9 344.8L489.6 323.9M489.6 323.9L473.7 318.1M441.1 336.5L450.9 344.8M547.2 320.6L529.8 302.5M529.8 302.5L450.9 344.8M450.9 344.8L479.2 355.7M701.7 213.7L746.8 191.2M663.1 218.5L701.7 213.7M489.6 323.9L529.8 302.5M529.8 302.5L508.2 299.1M701.7 213.7L613.7 258.6M613.7 258.6L619.1 284.3M657.3 236.3L701.7 213.7M622.1 239.2L657.3 236.3M613.7 258.6L529.8 302.5M529.8 302.5L571.2 280.7M571.2 280.7L544.5 279.6M613.7 258.6L657.3 236.3M582.5 259.6L613.7 258.6M571.2 280.7L613.7 258.6" stroke="#000" stroke-opacity="0.28" stroke-width="0.9" stroke-dasharray="1.6 1.1" fill="none"/><path d="M418.8 319.7L424.5 315.5L430.6 311.2L437.1 306.8L443.9 302.3L451.1 297.7L458.6 293.0L466.5 288.2L474.8 283.3L483.4 278.3L492.4 273.2L501.6 267.9L511.3 262.7L521.2 257.3L531.5 251.8L542.1 246.3L553.0 240.6L564.2 234.9L575.7 229.2L587.5 223.4L599.6 217.5L611.9 211.5L624.5 205.5L637.4 199.5L650.5 193.4L663.8 187.3L677.4 181.1L691.1 174.9L705.1 168.7L719.2 162.4L733.6 156.2M416.8 318.4L422.1 314.4L427.7 310.3L433.8 306.0L440.2 301.7L447.0 297.2L454.2 292.6L461.7 287.9L469.6 283.2L477.9 278.3L486.6 273.3L495.6 268.2L504.9 263.0L514.6 257.7L524.6 252.4L535.0 246.9L545.7 241.4L556.7 235.8L568.0 230.1L579.6 224.4L591.5 218.6L603.7 212.7L616.2 206.8L628.9 200.8L641.9 194.8L655.1 188.8L668.6 182.7L682.2 176.5L696.1 170.3L710.2 164.1L724.5 157.9M414.9 317.2L419.7 313.3L425.0 309.3L430.6 305.3L436.7 301.0L443.1 296.7L449.9 292.3L457.1 287.7L464.7 283.1L472.7 278.3L481.0 273.4L489.7 268.4L498.8 263.4L508.2 258.2L518.0 252.9L528.1 247.6L538.6 242.2L549.4 236.6L560.5 231.1L572.0 225.4L583.7 219.7L595.8 213.9L608.1 208.0L620.7 202.1L633.6 196.2L646.7 190.2L660.1 184.1L673.7 178.0L687.6 171.9L701.6 165.8L715.9 159.6M413.1 316.0L417.5 312.3L422.3 308.5L427.6 304.6L433.3 300.5L439.3 296.3L445.8 292.0L452.7 287.5L459.9 283.0L467.6 278.3L475.6 273.6L484.1 268.7L492.9 263.7L502.1 258.6L511.6 253.5L521.5 248.2L531.8 242.9L542.4 237.4L553.4 231.9L564.7 226.4L576.3 220.7L588.2 215.0L600.4 209.2L612.9 203.3L625.6 197.4L638.7 191.5L652.0 185.5L665.6 179.5L679.3 173.4L693.4 167.3L707.6 161.1M411.3 315.0L415.3 311.4L419.8 307.7L424.7 303.9L430.0 300.0L435.7 295.9L441.8 291.7L448.4 287.4L455.3 282.9L462.7 278.4L470.5 273.7L478.6 268.9L487.2 264.1L496.2 259.1L505.5 254.0L515.2 248.8L525.3 243.6L535.7 238.2L546.5 232.8L557.6 227.3L569.1 221.7L580.8 216.0L592.9 210.3L605.3 204.5L618.0 198.7L631.0 192.8L644.2 186.8L657.7 180.8L671.4 174.8L685.4 168.7L699.6 162.6M409.6 314.0L413.2 310.6L417.3 307.0L421.8 303.3L426.8 299.5L432.2 295.5L438.0 291.5L444.2 287.2L450.9 282.9L458.0 278.5L465.5 273.9L473.4 269.2L481.7 264.4L490.5 259.5L499.6 254.5L509.1 249.4L519.0 244.3L529.2 239.0L539.9 233.6L550.8 228.2L562.1 222.6L573.8 217.0L585.8 211.3L598.1 205.6L610.7 199.8L623.6 193.9L636.7 188.0L650.2 182.1L663.9 176.1L677.8 170.0L692.0 164.0M407.9 313.2L411.2 309.8L415.0 306.4L419.1 302.8L423.7 299.1L428.8 295.2L434.3 291.3L440.3 287.2L446.6 282.9L453.5 278.6L460.7 274.1L468.4 269.5L476.5 264.8L485.0 260.0L493.9 255.1L503.2 250.0L512.9 244.9L523.0 239.7L533.5 234.4L544.3 229.0L555.5 223.5L567.0 218.0L578.9 212.4L591.1 206.7L603.6 200.9L616.4 195.1L629.5 189.2L642.9 183.3L656.6 177.3L670.5 171.3L684.6 165.3M406.4 312.3L409.3 309.1L412.7 305.8L416.5 302.3L420.8 298.7L425.5 295.0L430.7 291.1L436.4 287.1L442.5 282.9L449.1 278.7L456.1 274.3L463.5 269.8L471.4 265.2L479.7 260.4L488.4 255.6L497.5 250.6L507.0 245.6L517.0 240.4L527.3 235.2L538.0 229.8L549.1 224.4L560.5 218.9L572.3 213.3L584.4 207.7L596.8 201.9L609.5 196.2L622.6 190.3L635.9 184.4L649.6 178.5L663.4 172.5L677.6 166.5M404.8 311.6L407.4 308.5L410.5 305.3L414.0 301.9L417.9 298.4L422.4 294.7L427.3 291.0L432.7 287.0L438.5 283.0L444.8 278.8L451.6 274.5L458.8 270.1L466.4 265.5L474.5 260.9L483.1 256.1L492.0 251.2L501.4 246.2L511.2 241.1L521.3 235.9L531.9 230.6L542.9 225.2L554.2 219.8L565.8 214.2L577.9 208.6L590.2 202.9L602.9 197.2L615.9 191.4L629.2 185.5L642.8 179.6L656.7 173.6L670.8 167.6M403.4 310.9L405.6 307.9L408.3 304.8L411.5 301.5L415.2 298.1L419.3 294.6L424.0 290.9L429.1 287.0L434.7 283.1L440.7 279.0L447.3 274.7L454.2 270.4L461.7 265.9L469.6 261.3L477.9 256.6L486.7 251.7L495.9 246.8L505.6 241.8L515.6 236.6L526.0 231.4L536.9 226.0L548.1 220.6L559.7 215.1L571.6 209.5L583.9 203.9L596.5 198.2L609.5 192.4L622.7 186.5L636.3 180.6L650.1 174.7L664.2 168.7M402.0 310.3L403.9 307.4L406.3 304.4L409.2 301.2L412.5 297.9L416.4 294.4L420.8 290.8L425.6 287.0L431.0 283.1L436.8 279.1L443.1 275.0L449.9 270.7L457.1 266.3L464.8 261.7L473.0 257.1L481.6 252.3L490.6 247.4L500.1 242.4L510.0 237.3L520.4 232.1L531.1 226.8L542.2 221.4L553.7 216.0L565.6 210.4L577.8 204.8L590.4 199.1L603.3 193.3L616.5 187.5L630.0 181.6L643.8 175.7L657.9 169.7M400.6 309.7L402.2 306.9L404.3 304.0L406.9 300.9L410.0 297.7L413.6 294.3L417.7 290.7L422.3 287.1L427.4 283.3L432.9 279.3L439.0 275.2L445.6 271.0L452.7 266.6L460.2 262.1L468.2 257.5L476.6 252.8L485.5 248.0L494.9 243.0L504.7 238.0L514.9 232.8L525.5 227.5L536.5 222.2L547.9 216.8L559.7 211.2L571.9 205.6L584.4 200.0L597.3 194.2L610.5 188.4L623.9 182.6L637.7 176.7L651.8 170.7M399.3 309.2L400.6 306.5L402.3 303.6L404.6 300.6L407.5 297.5L410.8 294.2L414.6 290.7L419.0 287.1L423.9 283.4L429.2 279.5L435.1 275.5L441.5 271.3L448.3 267.0L455.7 262.6L463.5 258.0L471.8 253.3L480.6 248.5L489.8 243.6L499.5 238.6L509.6 233.5L520.1 228.3L531.0 222.9L542.4 217.5L554.1 212.0L566.2 206.5L578.7 200.8L591.5 195.1L604.6 189.3L618.1 183.5L631.9 177.5L645.9 171.6M398.0 308.7L399.0 306.1L400.5 303.4L402.5 300.4L405.1 297.4L408.1 294.1L411.7 290.7L415.8 287.2L420.5 283.5L425.6 279.7L431.3 275.7L437.5 271.6L444.2 267.4L451.4 263.0L459.0 258.5L467.2 253.8L475.8 249.1L484.9 244.2L494.5 239.2L504.5 234.1L514.9 228.9L525.7 223.6L537.0 218.3L548.6 212.8L560.7 207.2L573.1 201.6L585.9 195.9L599.0 190.1L612.4 184.3L626.2 178.4L640.3 172.4M396.8 308.3L397.5 305.8L398.7 303.1L400.4 300.3L402.7 297.3L405.5 294.1L408.9 290.8L412.8 287.3L417.2 283.7L422.2 279.9L427.6 276.0L433.6 271.9L440.1 267.7L447.2 263.4L454.7 258.9L462.7 254.3L471.2 249.6L480.2 244.8L489.6 239.8L499.5 234.8L509.8 229.6L520.6 224.3L531.8 219.0L543.4 213.5L555.4 208.0L567.7 202.4L580.5 196.7L593.5 190.9L607.0 185.1L620.7 179.2L634.8 173.2M395.6 307.9L396.0 305.5L396.9 302.9L398.4 300.1L400.4 297.2L403.0 294.1L406.2 290.8L409.8 287.4L414.0 283.9L418.8 280.1L424.1 276.3L429.9 272.3L436.2 268.1L443.1 263.8L450.5 259.4L458.3 254.8L466.7 250.1L475.6 245.3L484.9 240.4L494.7 235.4L504.9 230.2L515.6 225.0L526.7 219.6L538.3 214.2L550.2 208.7L562.5 203.1L575.2 197.4L588.3 191.6L601.7 185.8L615.4 179.9L629.5 174.0M394.4 307.6L394.5 305.2L395.2 302.7L396.5 300.0L398.3 297.1L400.6 294.1L403.5 290.9L406.9 287.6L411.0 284.0L415.5 280.4L420.6 276.6L426.3 272.6L432.4 268.5L439.1 264.2L446.4 259.8L454.1 255.3L462.3 250.7L471.1 245.9L480.3 241.0L490.0 236.0L500.2 230.8L510.8 225.6L521.8 220.3L533.3 214.9L545.2 209.4L557.5 203.8L570.1 198.1L583.2 192.3L596.6 186.5L610.3 180.6L624.3 174.7M393.3 307.3L393.2 305.0L393.6 302.6L394.6 299.9L396.1 297.1L398.2 294.1L400.9 291.0L404.2 287.7L408.0 284.2L412.3 280.6L417.3 276.8L422.7 272.9L428.7 268.9L435.3 264.6L442.4 260.3L450.0 255.8L458.1 251.2L466.8 246.4L475.9 241.5L485.5 236.5L495.6 231.4L506.1 226.2L517.1 220.9L528.5 215.5L540.3 210.0L552.6 204.4L565.2 198.7L578.2 193.0L591.6 187.2L605.3 181.3L619.4 175.4M392.2 307.1L391.8 304.9L392.0 302.5L392.7 299.9L394.1 297.1L395.9 294.2L398.4 291.1L401.5 287.9L405.1 284.5L409.2 280.9L414.0 277.2L419.3 273.3L425.2 269.2L431.6 265.0L438.5 260.7L446.0 256.3L454.0 251.7L462.6 246.9L471.6 242.1L481.1 237.1L491.1 232.0L501.6 226.8L512.5 221.5L523.9 216.1L535.7 210.6L547.9 205.0L560.5 199.4L573.4 193.6L586.8 187.8L600.5 181.9L614.5 176.0M418.8 319.7L416.8 318.4L414.9 317.2L413.1 316.0L411.3 315.0L409.6 314.0L407.9 313.2L406.4 312.3L404.8 311.6L403.4 310.9L402.0 310.3L400.6 309.7L399.3 309.2L398.0 308.7L396.8 308.3L395.6 307.9L394.4 307.6L393.3 307.3L392.2 307.1M437.1 306.8L433.8 306.0L430.6 305.3L427.6 304.6L424.7 303.9L421.8 303.3L419.1 302.8L416.5 302.3L414.0 301.9L411.5 301.5L409.2 301.2L406.9 300.9L404.6 300.6L402.5 300.4L400.4 300.3L398.4 300.1L396.5 300.0L394.6 299.9L392.7 299.9M458.6 293.0L454.2 292.6L449.9 292.3L445.8 292.0L441.8 291.7L438.0 291.5L434.3 291.3L430.7 291.1L427.3 291.0L424.0 290.9L420.8 290.8L417.7 290.7L414.6 290.7L411.7 290.7L408.9 290.8L406.2 290.8L403.5 290.9L400.9 291.0L398.4 291.1M483.4 278.3L477.9 278.3L472.7 278.3L467.6 278.3L462.7 278.4L458.0 278.5L453.5 278.6L449.1 278.7L444.8 278.8L440.7 279.0L436.8 279.1L432.9 279.3L429.2 279.5L425.6 279.7L422.2 279.9L418.8 280.1L415.5 280.4L412.3 280.6L409.2 280.9M511.3 262.7L504.9 263.0L498.8 263.4L492.9 263.7L487.2 264.1L481.7 264.4L476.5 264.8L471.4 265.2L466.4 265.5L461.7 265.9L457.1 266.3L452.7 266.6L448.3 267.0L444.2 267.4L440.1 267.7L436.2 268.1L432.4 268.5L428.7 268.9L425.2 269.2M542.1 246.3L535.0 246.9L528.1 247.6L521.5 248.2L515.2 248.8L509.1 249.4L503.2 250.0L497.5 250.6L492.0 251.2L486.7 251.7L481.6 252.3L476.6 252.8L471.8 253.3L467.2 253.8L462.7 254.3L458.3 254.8L454.1 255.3L450.0 255.8L446.0 256.3M575.7 229.2L568.0 230.1L560.5 231.1L553.4 231.9L546.5 232.8L539.9 233.6L533.5 234.4L527.3 235.2L521.3 235.9L515.6 236.6L510.0 237.3L504.7 238.0L499.5 238.6L494.5 239.2L489.6 239.8L484.9 240.4L480.3 241.0L475.9 241.5L471.6 242.1M611.9 211.5L603.7 212.7L595.8 213.9L588.2 215.0L580.8 216.0L573.8 217.0L567.0 218.0L560.5 218.9L554.2 219.8L548.1 220.6L542.2 221.4L536.5 222.2L531.0 222.9L525.7 223.6L520.6 224.3L515.6 225.0L510.8 225.6L506.1 226.2L501.6 226.8M650.5 193.4L641.9 194.8L633.6 196.2L625.6 197.4L618.0 198.7L610.7 199.8L603.6 200.9L596.8 201.9L590.2 202.9L583.9 203.9L577.8 204.8L571.9 205.6L566.2 206.5L560.7 207.2L555.4 208.0L550.2 208.7L545.2 209.4L540.3 210.0L535.7 210.6M691.1 174.9L682.2 176.5L673.7 178.0L665.6 179.5L657.7 180.8L650.2 182.1L642.9 183.3L635.9 184.4L629.2 185.5L622.7 186.5L616.5 187.5L610.5 188.4L604.6 189.3L599.0 190.1L593.5 190.9L588.3 191.6L583.2 192.3L578.2 193.0L573.4 193.6M733.6 156.2L724.5 157.9L715.9 159.6L707.6 161.1L699.6 162.6L692.0 164.0L684.6 165.3L677.6 166.5L670.8 167.6L664.2 168.7L657.9 169.7L651.8 170.7L645.9 171.6L640.3 172.4L634.8 173.2L629.5 174.0L624.3 174.7L619.4 175.4L614.5 176.0" stroke="#1a1010" stroke-opacity="0.55" stroke-width="0.85" stroke-dasharray="2.2 1.2" fill="none"/><path d="M451.0 355.9L447.4 348.7M447.4 348.7L439.4 346.0M439.4 346.0L442.7 353.5M442.7 353.5L451.0 355.9M461.0 358.9L457.0 352.0M457.0 352.0L447.4 348.7M451.0 355.9L461.0 358.9M447.4 348.7L443.4 342.0M443.4 342.0L435.8 339.1M435.8 339.1L439.4 346.0M472.7 362.4L468.3 355.9M468.3 355.9L457.0 352.0M461.0 358.9L472.7 362.4M457.0 352.0L452.6 345.5M452.6 345.5L443.4 342.0M443.4 342.0L439.1 335.7M439.1 335.7L431.8 332.7M431.8 332.7L435.8 339.1M486.2 366.6L481.2 360.4M481.2 360.4L468.3 355.9M472.7 362.4L486.2 366.6M468.3 355.9L463.4 349.6M463.4 349.6L452.6 345.5M439.1 335.7L434.4 329.8M434.4 329.8L427.5 326.8M427.5 326.8L431.8 332.7M452.6 345.5L447.8 339.3M447.8 339.3L439.1 335.7M501.5 371.3L496.0 365.6M496.0 365.6L481.2 360.4M486.2 366.6L501.5 371.3M481.2 360.4L475.8 354.4M475.8 354.4L463.4 349.6M434.4 329.8L429.3 324.5M429.3 324.5L422.8 321.6M422.8 321.6L427.5 326.8M463.4 349.6L458.0 343.6M458.0 343.6L447.8 339.3M447.8 339.3L442.6 333.5M442.6 333.5L434.4 329.8M518.7 376.7L512.6 371.4M512.6 371.4L496.0 365.6M501.5 371.3L518.7 376.7M496.0 365.6L489.9 359.8M489.9 359.8L475.8 354.4M429.3 324.5L423.7 319.8M423.7 319.8L417.7 317.0M417.7 317.0L422.8 321.6M475.8 354.4L469.8 348.5M469.8 348.5L458.0 343.6M442.6 333.5L436.9 328.1M436.9 328.1L429.3 324.5M822.1 298.8L823.8 289.3M823.8 289.3L830.7 281.0M830.7 281.0L826.7 291.5M826.7 291.5L822.1 298.8M458.0 343.6L452.2 337.8M452.2 337.8L442.6 333.5M537.8 382.8L531.1 377.9M531.1 377.9L512.6 371.4M518.7 376.7L537.8 382.8M813.6 307.1L813.3 298.5M813.3 298.5L823.8 289.3M822.1 298.8L813.6 307.1M801.2 316.2L799.1 308.5M799.1 308.5L813.3 298.5M813.6 307.1L801.2 316.2M512.6 371.4L505.9 366.0M505.9 366.0L489.9 359.8M784.9 326.2L781.3 319.3M781.3 319.3L799.1 308.5M801.2 316.2L784.9 326.2M423.7 319.8L417.5 315.7M417.5 315.7L412.1 313.2M412.1 313.2L417.7 317.0M558.8 389.5L551.6 385.1M551.6 385.1L531.1 377.9M537.8 382.8L558.8 389.5M489.9 359.8L483.3 354.1M483.3 354.1L469.8 348.5M436.9 328.1L430.7 323.1M430.7 323.1L423.7 319.8M764.8 337.1L759.8 331.0M759.8 331.0L781.3 319.3M784.9 326.2L764.8 337.1M469.8 348.5L463.3 342.7M463.3 342.7L452.2 337.8M452.2 337.8L445.9 332.3M445.9 332.3L436.9 328.1M740.8 348.9L734.7 343.5M734.7 343.5L759.8 331.0M764.8 337.1L740.8 348.9M531.1 377.9L523.8 372.9M523.8 372.9L505.9 366.0M581.9 396.9L574.1 393.1M574.1 393.1L551.6 385.1M558.8 389.5L581.9 396.9M823.8 289.3L825.6 279.2M825.6 279.2L834.8 269.8M834.8 269.8L830.7 281.0M417.5 315.7L410.8 312.3M410.8 312.3L406.0 310.2M406.0 310.2L412.1 313.2M713.0 361.6L706.1 356.8M706.1 356.8L734.7 343.5M740.8 348.9L713.0 361.6M813.3 298.5L812.8 289.3M812.8 289.3L825.6 279.2M505.9 366.0L498.6 360.5M498.6 360.5L483.3 354.1M430.7 323.1L423.9 318.7M423.9 318.7L417.5 315.7M606.9 404.9L598.7 401.8M598.7 401.8L574.1 393.1M581.9 396.9L606.9 404.9M681.4 375.1L673.8 371.0M673.8 371.0L706.1 356.8M713.0 361.6L681.4 375.1M799.1 308.5L796.7 300.2M796.7 300.2L812.8 289.3M483.3 354.1L476.1 348.5M476.1 348.5L463.3 342.7M445.9 332.3L438.9 327.1M438.9 327.1L430.7 323.1M463.3 342.7L456.2 337.2M456.2 337.2L445.9 332.3M551.6 385.1L543.6 380.5M543.6 380.5L523.8 372.9M646.1 389.6L638.0 386.0M638.0 386.0L673.8 371.0M681.4 375.1L646.1 389.6M598.7 401.8L638.0 386.0M646.1 389.6L606.9 404.9M781.3 319.3L777.1 311.9M777.1 311.9L796.7 300.2M523.8 372.9L515.7 367.7M515.7 367.7L498.6 360.5M759.8 331.0L754.2 324.4M754.2 324.4L777.1 311.9M423.9 318.7L416.4 314.9M416.4 314.9L410.8 312.3M574.1 393.1L565.5 389.0M565.5 389.0L543.6 380.5M498.6 360.5L490.5 354.9M490.5 354.9L476.1 348.5M438.9 327.1L431.2 322.4M431.2 322.4L423.9 318.7M825.6 279.2L827.3 268.2M827.3 268.2L839.3 257.8M839.3 257.8L834.8 269.8M734.7 343.5L727.9 337.7M727.9 337.7L754.2 324.4M476.1 348.5L468.1 342.9M468.1 342.9L456.2 337.2M456.2 337.2L448.4 331.8M448.4 331.8L438.9 327.1M812.8 289.3L812.1 279.4M812.1 279.4L827.3 268.2M706.1 356.8L698.2 351.7M698.2 351.7L727.9 337.7M598.7 401.8L589.5 398.3M589.5 398.3L565.5 389.0M543.6 380.5L534.8 375.7M534.8 375.7L515.7 367.7M796.7 300.2L793.7 291.3M793.7 291.3L812.1 279.4M673.8 371.0L665.3 366.4M665.3 366.4L698.2 351.7M638.0 386.0L629.0 382.0M629.0 382.0L665.3 366.4M589.5 398.3L629.0 382.0M515.7 367.7L506.8 362.3M506.8 362.3L490.5 354.9M431.2 322.4L422.8 318.0M422.8 318.0L416.4 314.9M777.1 311.9L772.3 303.9M772.3 303.9L793.7 291.3M490.5 354.9L481.6 349.3M481.6 349.3L468.1 342.9M448.4 331.8L439.7 326.7M439.7 326.7L431.2 322.4M468.1 342.9L459.2 337.3M459.2 337.3L448.4 331.8M565.5 389.0L556.0 384.5M556.0 384.5L534.8 375.7M754.2 324.4L747.7 317.3M747.7 317.3L772.3 303.9M827.3 268.2L828.9 256.3M828.9 256.3L844.0 244.7M844.0 244.7L839.3 257.8M727.9 337.7L720.1 331.3M720.1 331.3L747.7 317.3M534.8 375.7L525.0 370.5M525.0 370.5L506.8 362.3M812.1 279.4L811.0 268.6M811.0 268.6L828.9 256.3M589.5 398.3L579.3 394.3M579.3 394.3L556.0 384.5M698.2 351.7L689.4 346.0M689.4 346.0L720.1 331.3M506.8 362.3L496.8 356.7M496.8 356.7L481.6 349.3M793.7 291.3L790.2 281.6M790.2 281.6L811.0 268.6M665.3 366.4L655.7 361.5M655.7 361.5L689.4 346.0M459.2 337.3L449.5 331.8M449.5 331.8L439.7 326.7M481.6 349.3L471.7 343.6M471.7 343.6L459.2 337.3M579.3 394.3L619.0 377.6M619.0 377.6L629.0 382.0M619.0 377.6L655.7 361.5M772.3 303.9L766.7 295.2M766.7 295.2L790.2 281.6M556.0 384.5L545.3 379.7M545.3 379.7L525.0 370.5M747.7 317.3L740.3 309.5M740.3 309.5L766.7 295.2M828.9 256.3L830.6 243.3M830.6 243.3L849.1 230.3M849.1 230.3L844.0 244.7M525.0 370.5L514.0 365.0M514.0 365.0L496.8 356.7M496.8 356.7L485.8 350.9M485.8 350.9L471.7 343.6M720.1 331.3L711.2 324.4M711.2 324.4L740.3 309.5M471.7 343.6L460.6 337.8M460.6 337.8L449.5 331.8M811.0 268.6L809.6 256.8M809.6 256.8L830.6 243.3M689.4 346.0L679.3 339.8M679.3 339.8L711.2 324.4M790.2 281.6L786.1 270.9M786.1 270.9L809.6 256.8M655.7 361.5L644.8 355.9M644.8 355.9L679.3 339.8M579.3 394.3L567.8 389.9M567.8 389.9L607.6 372.6M607.6 372.6L619.0 377.6M607.6 372.6L644.8 355.9M545.3 379.7L533.3 374.4M533.3 374.4L514.0 365.0M766.7 295.2L760.1 285.6M760.1 285.6L786.1 270.9M514.0 365.0L501.7 359.1M501.7 359.1L485.8 350.9M830.6 243.3L832.2 228.7M832.2 228.7L854.6 214.4M854.6 214.4L849.1 230.3M740.3 309.5L731.7 300.9M731.7 300.9L760.1 285.6M809.6 256.8L807.7 243.6M807.7 243.6L832.2 228.7M711.2 324.4L700.9 316.7M700.9 316.7L731.7 300.9M679.3 339.8L667.8 333.0M667.8 333.0L700.9 316.7M567.8 389.9L554.8 384.9M554.8 384.9L594.7 367.1M594.7 367.1L607.6 372.6M644.8 355.9L632.3 349.8M632.3 349.8L667.8 333.0M786.1 270.9L781.0 259.0M781.0 259.0L807.7 243.6M594.7 367.1L632.3 349.8M760.1 285.6L752.3 274.9M752.3 274.9L781.0 259.0M832.2 228.7L833.8 212.4M833.8 212.4L860.7 196.5M860.7 196.5L854.6 214.4M731.7 300.9L721.6 291.3M721.6 291.3L752.3 274.9M807.7 243.6L805.2 228.8M805.2 228.8L833.8 212.4M700.9 316.7L689.0 308.1M689.0 308.1L721.6 291.3M554.8 384.9L539.9 379.1M539.9 379.1L579.8 360.8M579.8 360.8L594.7 367.1M667.8 333.0L654.4 325.3M654.4 325.3L689.0 308.1M632.3 349.8L618.0 342.9M618.0 342.9L654.4 325.3M579.8 360.8L618.0 342.9M781.0 259.0L774.9 245.6M774.9 245.6L805.2 228.8M752.3 274.9L743.1 262.8M743.1 262.8L774.9 245.6M833.8 212.4L835.4 193.7M835.4 193.7L867.6 176.0M867.6 176.0L860.7 196.5M720.2 169.5L763.2 150.3M763.2 150.3L733.6 156.2M733.6 156.2L691.1 174.9M691.1 174.9L720.2 169.5M721.6 291.3L709.8 280.4M709.8 280.4L743.1 262.8M805.2 228.8L802.0 211.8M802.0 211.8L835.4 193.7M689.0 308.1L675.0 298.3M675.0 298.3L709.8 280.4M539.9 379.1L522.8 372.5M522.8 372.5L562.6 353.7M562.6 353.7L579.8 360.8M678.7 188.7L720.2 169.5M691.1 174.9L650.5 193.4M650.5 193.4L678.7 188.7M654.4 325.3L638.8 316.5M638.8 316.5L675.0 298.3M562.6 353.7L601.3 335.0M601.3 335.0L618.0 342.9M601.3 335.0L638.8 316.5M425.3 324.2L447.7 309.8M447.7 309.8L437.1 306.8M437.1 306.8L418.8 319.7M418.8 319.7L425.3 324.2M774.9 245.6L767.5 230.3M767.5 230.3L802.0 211.8M753.7 163.1L797.4 143.1M797.4 143.1L763.2 150.3M720.2 169.5L753.7 163.1M447.7 309.8L473.1 294.5M473.1 294.5L458.6 293.0M458.6 293.0L437.1 306.8M638.9 207.6L678.7 188.7M650.5 193.4L611.9 211.5M611.9 211.5L638.9 207.6M835.4 193.7L836.9 172.0M836.9 172.0L875.3 152.2M875.3 152.2L867.6 176.0M743.1 262.8L732.0 249.0M732.0 249.0L767.5 230.3M473.1 294.5L501.2 278.4M501.2 278.4L483.4 278.3M483.4 278.3L458.6 293.0M601.0 226.1L638.9 207.6M611.9 211.5L575.7 229.2M575.7 229.2L601.0 226.1M501.2 278.4L532.0 261.6M532.0 261.6L511.3 262.7M511.3 262.7L483.4 278.3M565.3 244.1L601.0 226.1M575.7 229.2L542.1 246.3M542.1 246.3L565.3 244.1M532.0 261.6L565.3 244.1M542.1 246.3L511.3 262.7M709.8 280.4L695.6 268.0M695.6 268.0L732.0 249.0M711.1 183.1L753.7 163.1M678.7 188.7L711.1 183.1M802.0 211.8L797.8 192.1M797.8 192.1L836.9 172.0M522.8 372.5L502.8 364.8M502.8 364.8L542.4 345.3M542.4 345.3L562.6 353.7M675.0 298.3L658.3 287.1M658.3 287.1L695.6 268.0M432.6 329.7L459.8 313.5M459.8 313.5L447.7 309.8M425.3 324.2L432.6 329.7M792.6 155.5L837.3 134.5M837.3 134.5L797.4 143.1M753.7 163.1L792.6 155.5M542.4 345.3L581.6 325.9M581.6 325.9L601.3 335.0M638.8 316.5L620.3 306.5M620.3 306.5L658.3 287.1M581.6 325.9L620.3 306.5M669.7 203.0L711.1 183.1M638.9 207.6L669.7 203.0M459.8 313.5L489.4 296.5M489.4 296.5L473.1 294.5M767.5 230.3L758.3 212.4M758.3 212.4L797.8 192.1M629.9 222.5L669.7 203.0M601.0 226.1L629.9 222.5M489.4 296.5L521.4 278.8M521.4 278.8L501.2 278.4M836.9 172.0L838.3 146.1M838.3 146.1L884.4 123.9M884.4 123.9L875.3 152.2M748.5 176.5L792.6 155.5M711.1 183.1L748.5 176.5M591.8 241.8L629.9 222.5M565.3 244.1L591.8 241.8M521.4 278.8L555.5 260.6M555.5 260.6L532.0 261.6M555.5 260.6L591.8 241.8M732.0 249.0L718.5 232.9M718.5 232.9L758.3 212.4M884.4 123.9L837.3 134.5M792.6 155.5L838.3 146.1M502.8 364.8L479.2 355.7M479.2 355.7L518.5 335.6M518.5 335.6L542.4 345.3M695.6 268.0L678.4 253.5M678.4 253.5L718.5 232.9M705.3 197.6L748.5 176.5M669.7 203.0L705.3 197.6M441.1 336.5L473.7 318.1M473.7 318.1L459.8 313.5M432.6 329.7L441.1 336.5M797.8 192.1L792.4 168.6M792.4 168.6L838.3 146.1M518.5 335.6L558.2 315.2M558.2 315.2L581.6 325.9M658.3 287.1L638.3 274.1M638.3 274.1L678.4 253.5M473.7 318.1L508.2 299.1M508.2 299.1L489.4 296.5M620.3 306.5L598.2 294.7M598.2 294.7L638.3 274.1M558.2 315.2L598.2 294.7M748.5 176.5L792.4 168.6M663.1 218.5L705.3 197.6M629.9 222.5L663.1 218.5M508.2 299.1L544.5 279.6M544.5 279.6L521.4 278.8M622.1 239.2L663.1 218.5M591.8 241.8L622.1 239.2M758.3 212.4L746.8 191.2M746.8 191.2L792.4 168.6M544.5 279.6L582.5 259.6M582.5 259.6L555.5 260.6M582.5 259.6L622.1 239.2M705.3 197.6L746.8 191.2M718.5 232.9L701.7 213.7M701.7 213.7L746.8 191.2M479.2 355.7L450.9 344.8M450.9 344.8L489.6 323.9M489.6 323.9L518.5 335.6M489.6 323.9L473.7 318.1M441.1 336.5L450.9 344.8M663.1 218.5L701.7 213.7M678.4 253.5L657.3 236.3M657.3 236.3L701.7 213.7M489.6 323.9L529.8 302.5M529.8 302.5L558.2 315.2M529.8 302.5L508.2 299.1M638.3 274.1L613.7 258.6M613.7 258.6L657.3 236.3M622.1 239.2L657.3 236.3M529.8 302.5L571.2 280.7M571.2 280.7L598.2 294.7M571.2 280.7L613.7 258.6M571.2 280.7L544.5 279.6M582.5 259.6L613.7 258.6" stroke="#203020" stroke-opacity="0.3" stroke-width="1.0" stroke-dasharray="1.2 1.4" fill="none"/>
<linearGradient id="reg" gradientUnits="userSpaceOnUse" x1="884" y1="124" x2="830" y2="292"><stop offset="0" stop-color="#e8d000"/><stop offset="0.55" stop-color="#a8c810"/><stop offset="1" stop-color="#20a020"/></linearGradient>
<path d="M884 123.5L872 170L858 215L846 250L831 291L822 294L840 248L856 200L875 140Z" fill="url(#reg)" fill-opacity="0.85"/>
<path d="M884 123.5L872 170L858 215L846 250L831 291" stroke="#b8b828" stroke-width="1" fill="none" opacity="0.8"/>
<linearGradient id="frg" gradientUnits="userSpaceOnUse" x1="835" y1="280" x2="660" y2="385"><stop offset="0" stop-color="#28b028"/><stop offset="0.5" stop-color="#1c7a24"/><stop offset="1" stop-color="#183a1c"/></linearGradient>
<path d="M840 251L833.3 284.4L817.8 313.3L795.6 333.3L773.3 344.4L746.7 357.8L706.7 373.3L662.2 384.4L640 391L684.4 373.3L724.4 355.6L751.1 340L782.2 324.4L808.9 306.7L828.9 284.4L836 262Z" fill="url(#frg)" fill-opacity="0.8"/>
<path d="M833.3 284.4L817.8 313.3L795.6 333.3L773.3 344.4L746.7 357.8L706.7 373.3L662.2 384.4" stroke="#30a030" stroke-width="0.9" fill="none" opacity="0.7"/>
<path d="M596 393L622 396L611 406Z" fill="#080808" opacity="0.9"/>
<path d="M615 169V177" stroke="#ddd" stroke-width="1.5"/>
<path d="M615.5 142V156.5H622" stroke="#ccc" stroke-width="1.3" fill="none"/>
<path d="M252.9 461.8Q248 460 244.5 463.5L244.3 472.5L242.2 475.5M244.3 467.5Q250 465.5 255 468Q257.5 472 254.5 474.5Q249 476.5 245 472.5" stroke="#e6e6e6" stroke-width="1.3" fill="none" stroke-linecap="round"/>
<path d="M898.8 548.7L894.9 576.4M897.7 560.1L902.6 560.1L908.1 562.9L911.9 569.8L910.9 577.5L904.7 581.3L896.3 575" stroke="#e6e6e6" stroke-width="1.3" fill="none" stroke-linecap="round" stroke-linejoin="round"/>
</svg>
</div>
<div class="abs" style="left:2px;top:37px;width:363px;height:66px;background:#fff;border-radius:4px;box-shadow:0 1px 2px rgba(0,0,0,0.35);overflow:hidden"><div class="abs" style="left:0;top:0;width:363px;height:21.5px;background:#f2f2f2"></div><div class="abs" style="left:346px;top:2.3px;width:16px;height:16.5px;background:#dcdcdc"></div><svg class="abs" style="left:350px;top:6.5px" width="8" height="8"><path d="M1 1L7 7M7 1L1 7" stroke="#f8f8f8" stroke-width="1"/></svg></div><svg class="abs" style="left:4px;top:58px;overflow:visible" width="48" height="42" viewBox="0 0 823 720" fill="none" stroke-linecap="round" stroke-linejoin="round">
<path d="M270 88C220 70 150 95 110 140C60 190 45 270 70 330C90 360 120 375 150 380" stroke="#8a4a9e" stroke-width="46"/>
<path d="M280 68C330 45 420 45 480 70C520 85 545 105 560 125" stroke="#1a56a6" stroke-width="46"/>
<path d="M550 135C590 165 620 210 625 260C625 285 615 300 605 310" stroke="#f0662a" stroke-width="44"/>
<path d="M600 320C625 350 630 400 590 445" stroke="#8a4a9e" stroke-width="40"/>
<path d="M140 205C175 200 200 185 212 150" stroke="#f4a82a" stroke-width="36"/>
<path d="M275 150C300 140 320 125 328 95" stroke="#e0206e" stroke-width="36"/>
<path d="M375 185C420 190 470 170 480 140C475 120 455 110 440 115" stroke="#6ab02a" stroke-width="42"/>
<path d="M200 245C230 215 280 205 325 220M240 265C265 255 290 250 300 240" stroke="#f0662a" stroke-width="34"/>
<path d="M150 255C115 270 110 300 140 315C180 325 230 320 255 310" stroke="#e0206e" stroke-width="38"/>
<path d="M325 300C370 280 410 275 440 255C480 240 520 238 555 238" stroke="#f4a82a" stroke-width="40"/>
<path d="M495 315C510 290 535 280 560 300" stroke="#1a56a6" stroke-width="34"/>
<path d="M180 370C230 400 300 405 350 375C375 360 395 345 420 340" stroke="#6ab02a" stroke-width="46"/>
<path d="M455 365C500 370 530 395 525 430C515 455 490 465 465 455" stroke="#e0206e" stroke-width="44"/>
<path d="M310 440C350 420 395 410 420 430C450 500 480 600 495 690C470 610 420 520 310 440Z" fill="#1a56a6" stroke="#1a56a6" stroke-width="12"/>
<text x="548" y="655" font-family="Liberation Serif" font-style="italic" font-size="200" fill="#f01020" stroke="#f01020" stroke-width="6" textLength="240" lengthAdjust="spacingAndGlyphs" transform="rotate(-12 660 590)">Pro</text>
</svg><svg class="abs" style="left:65px;top:62px" width="30" height="28" viewBox="0 0 30 28">
<rect x="1.5" y="1.5" width="9" height="9" fill="#fff" stroke="#333" stroke-width="1.3"/>
<path d="M3 5.5L5.5 8L11 1" stroke="#1a3ad0" stroke-width="1.6" fill="none"/>
<defs><linearGradient id="rb" x1="0" y1="0" x2="1" y2="0"><stop offset="0" stop-color="#40e060"/><stop offset="0.45" stop-color="#30d8d0"/><stop offset="0.75" stop-color="#e040e0"/><stop offset="1" stop-color="#f02060"/></linearGradient></defs>
<path d="M6 24L9 27H26L28 24V23L26 26H9L6 23Z" fill="#ccc"/>
<path d="M6 21L9 24H26L28 21V20L26 23H9L6 20Z" fill="#bbb"/>
<path d="M6 18L9 21H26L28 18V17L26 20H9L6 17Z" fill="#ccc"/>
<path d="M6 15L9 18H26L28 15V14L26 17H9L6 14Z" fill="#bbb"/>
<path d="M6 14L10 11H28L26 17H9Z" fill="url(#rb)"/>
<path d="M9 15.5H25.5M8 16.5H25" stroke="#fff" stroke-width="0.5" opacity="0.6"/>
<path d="M16 11L24 11L22 15Z" fill="#f030d0" opacity="0.8"/>
</svg><svg class="abs" style="left:108px;top:64px" width="30" height="26" viewBox="0 0 30 26" fill="none">
<path d="M4 2C1 8 2 15 6 21C9 24 12 22 14 19C17 15 20 10 25 12" stroke="#111" stroke-width="1.4"/>
<path d="M11 2C13 8 12 14 8 19" stroke="#111" stroke-width="1.4"/>
<path d="M3 1.5H6M10 1.5H13" stroke="#556" stroke-width="1.8"/>
<path d="M18 18L24 12L28 20L21 24Z" fill="#d8f0ff" opacity="0.7"/>
<path d="M20 22L27 20L24 25Z" fill="#f0a0ff" opacity="0.6"/>
<ellipse cx="24.5" cy="17" rx="4" ry="4.2" fill="#fff" stroke="#222" stroke-width="1.3"/>
<ellipse cx="24.5" cy="15.5" rx="2.6" ry="2.2" fill="#222"/>
</svg><svg class="abs" style="left:153px;top:63px" width="26" height="26" viewBox="0 0 26 26">
<defs><linearGradient id="fsg" x1="0" y1="0" x2="0" y2="1"><stop offset="0" stop-color="#9a9a9a"/><stop offset="1" stop-color="#6a6a6a"/></linearGradient></defs>
<path d="M0.5 1L20 1.5Q25 4 25 8V20Q25 24 20 25L0.5 26Z" fill="url(#fsg)"/>
<rect x="1" y="6" width="24" height="6" fill="#2050b0"/><rect x="1" y="12" width="24" height="6" fill="#2a6a20"/>
<circle cx="8" cy="11" r="4" fill="#f2c21a"/><circle cx="16" cy="11.5" r="3.3" fill="#f2c21a"/><circle cx="22" cy="12" r="2.7" fill="#f2c21a"/>
<circle cx="8" cy="11" r="1.2" fill="#9a6a10"/><circle cx="16" cy="11.5" r="1" fill="#9a6a10"/>
<rect x="1" y="2" width="2" height="3" fill="#e04040"/><rect x="1" y="19" width="2" height="5" fill="#e0c020"/>
<rect x="11" y="2" width="1.5" height="3" fill="#40c0e0"/><rect x="18" y="2" width="1.5" height="3" fill="#40c0e0"/>
</svg><svg class="abs" style="left:196px;top:62px" width="27" height="26" viewBox="0 0 27 26">
<rect x="1" y="1" width="22" height="24" fill="#f6f6f6"/>
<path d="M2 1L9 1L8 12L2 14Z" fill="#a0f0a0" opacity="0.8"/><path d="M3 16L10 18L5 23Z" fill="#c0a0ff" opacity="0.8"/><path d="M16 10L21 12L18 14Z" fill="#ffb0c0"/>
<ellipse cx="10" cy="14" rx="6" ry="6" fill="#999" opacity="0.5"/>
<circle cx="9.5" cy="9" r="6.2" fill="#e8fff0" stroke="#444" stroke-width="1.4"/>
<circle cx="9" cy="9" r="4.5" fill="#c0f4e0"/><path d="M9 4.5A4.5 4.5 0 0 1 13.5 9L9 9Z" fill="#f0f080"/><path d="M13.5 9A4.5 4.5 0 0 1 9 13.5L9 9Z" fill="#f8d0f0"/>
<path d="M14 13.5L23 22.5" stroke="#333" stroke-width="3.6" stroke-linecap="round"/>
<path d="M14.5 14L22.5 22" stroke="#1830c0" stroke-width="2.2" stroke-linecap="round"/>
</svg><svg class="abs" style="left:237px;top:63px" width="28" height="26" viewBox="0 0 28 26">
<defs><radialGradient id="cieg" gradientUnits="userSpaceOnUse" cx="13" cy="15" r="8"><stop offset="0" stop-color="#fff"/><stop offset="0.35" stop-color="#fff" stop-opacity="0.8"/><stop offset="1" stop-color="#fff" stop-opacity="0"/></radialGradient></defs>
<path d="M1.6 1V24.4H26" stroke="#222" stroke-width="1.3" fill="none"/>
<path d="M11 14L6 1.5L8 1.2Z" fill="#26ff26" stroke="#26ff26" stroke-width="0.4"/><path d="M11 14L8 1.2L10 2.5Z" fill="#53ff26" stroke="#53ff26" stroke-width="0.4"/><path d="M11 14L10 2.5L12 4.5Z" fill="#80ff26" stroke="#80ff26" stroke-width="0.4"/><path d="M11 14L12 4.5L14 7Z" fill="#adff26" stroke="#adff26" stroke-width="0.4"/><path d="M11 14L14 7L17 10Z" fill="#daff26" stroke="#daff26" stroke-width="0.4"/><path d="M11 14L17 10L20 13Z" fill="#ffce26" stroke="#ffce26" stroke-width="0.4"/><path d="M11 14L20 13L24 16.5Z" fill="#ff7a26" stroke="#ff7a26" stroke-width="0.4"/><path d="M11 14L24 16.5L19 19Z" fill="#ff2626" stroke="#ff2626" stroke-width="0.4"/><path d="M11 14L19 19L14 21.5Z" fill="#ff2692" stroke="#ff2692" stroke-width="0.4"/><path d="M11 14L14 21.5L10 23.5Z" fill="#ff26ff" stroke="#ff26ff" stroke-width="0.4"/><path d="M11 14L10 23.5L8 23.5Z" fill="#a426ff" stroke="#a426ff" stroke-width="0.4"/><path d="M11 14L8 23.5L6 21.5Z" fill="#4a26ff" stroke="#4a26ff" stroke-width="0.4"/><path d="M11 14L6 21.5L5 18Z" fill="#264aff" stroke="#264aff" stroke-width="0.4"/><path d="M11 14L5 18L4.5 14Z" fill="#2692ff" stroke="#2692ff" stroke-width="0.4"/><path d="M11 14L4.5 14L4.3 10Z" fill="#26daff" stroke="#26daff" stroke-width="0.4"/><path d="M11 14L4.3 10L4.6 6Z" fill="#26ffda" stroke="#26ffda" stroke-width="0.4"/><path d="M11 14L4.6 6L5.2 3Z" fill="#26ff92" stroke="#26ff92" stroke-width="0.4"/><path d="M11 14L5.2 3L6 1.5Z" fill="#26ff4a" stroke="#26ff4a" stroke-width="0.4"/>
<path d="M6 1.5C8 0.5 10 2 14 7L24 16.5L10 23.5C7 24 5 20 4.5 14C4 8 4.5 3 6 1.5Z" fill="url(#cieg)"/>
</svg><svg class="abs" style="left:280px;top:63px" width="28" height="26" viewBox="0 0 28 26">
<path d="M1 10L4 4L14 2L26 3L24 17L14 19L3 16Z" fill="#30c030"/>
<path d="M4 4L14 2L12 8L2 12Z" fill="#7020c0"/><path d="M14 2L26 3L22 8L12 8Z" fill="#e0e030"/><path d="M8 2.5L16 2L14 5Z" fill="#c02020"/>
<path d="M1 10L3 16L8 17L10 10Z" fill="#2020a0"/><path d="M3 16L14 19L10 12Z" fill="#20d0d0"/><path d="M12 8L22 8L24 17L14 15Z" fill="#60d030"/>
<path d="M2 1L13 23M10 3V23M12 9L26 7" stroke="#555" stroke-width="0.9" opacity="0.8"/>
</svg><svg class="abs" style="left:324px;top:61px" width="28" height="30" viewBox="0 0 28 30">
<path d="M2 7Q6 4 12 5.5L14 4L16 5.5Q21 3 25 3Q24 6 16 7L14 7Z" fill="#90d020"/>
<path d="M13.2 4.5L14.8 4.5L15 10L13 10Z" fill="#a050c0"/>
<path d="M4 27Q2 16 11 10Q8 17 7 27Z" fill="#1a60b0"/>
<path d="M8 27Q8 16 12.5 10Q12 17 12 27Z" fill="#8030a0"/>
<path d="M13 27Q12 17 14 10Q17 17 18 27Z" fill="#e0106a"/>
<path d="M19 26Q17 17 15.5 10Q21 16 22 25Z" fill="#f06a20"/>
<path d="M23 24Q21 16 16.5 10Q26 14 26 22Z" fill="#f6a820"/>
</svg>
<div class="abs" style="left:1035px;top:121.5px;width:204px;height:156.5px;background:#f0f0f0;border-radius:4px;box-shadow:0 0 1px rgba(0,0,0,0.4)"></div><div class="t" style="left:1038.3px;top:126.8px;font-size:9.9px;color:#8c8c8c;font-weight:normal;">Graph Control</div><div class="abs" style="left:1221.3px;top:124px;width:16px;height:16px;background:#e4e4e4"></div><svg class="abs" style="left:1225.5px;top:128px" width="8" height="8"><path d="M1 1L7 7M7 1L1 7" stroke="#fafafa" stroke-width="1"/></svg><div class="abs" style="left:1035px;top:142.5px;width:204px;height:1px;background:#e6e6e6"></div><div class="abs" style="left:1035px;top:143px;width:37.5px;height:18px;background:#f9f9f9;border-right:1px solid #e2e2e2"></div><div class="abs" style="left:1072.5px;top:145px;width:50.5px;height:15px;background:#f0f0f0;border-right:1px solid #e2e2e2"></div><div class="abs" style="left:1123px;top:145px;width:33px;height:15px;background:#f0f0f0;border-right:1px solid #e2e2e2"></div><div class="abs" style="left:1072.5px;top:160px;width:166.5px;height:1px;background:#e2e2e2"></div><div class="t" style="left:1041.8px;top:147.7px;font-size:9.3px;color:#111;font-weight:normal;">Axes</div><div class="t" style="left:1076.3px;top:148.7px;font-size:9.3px;color:#111;font-weight:normal;">Grid / Spin</div><div class="t" style="left:1129px;top:148.7px;font-size:9.3px;color:#111;font-weight:normal;">Slicer</div><div class="abs" style="left:1041.3px;top:175.2px;width:62px;height:38.5px;border:1px solid #dcdcdc"></div><div class="abs" style="left:1047px;top:170px;width:50px;height:10px;background:#f0f0f0"></div><div class="t" style="left:1049px;top:171.9px;font-size:8.8px;color:#111;font-weight:normal;">Dimensions</div><svg class="abs" style="left:1055.4px;top:184.1px" width="12" height="12"><circle cx="6" cy="6" r="4.8" fill="#fff" stroke="#5a5a5a" stroke-width="1"/></svg><div class="t" style="left:1069.5px;top:186.5px;font-size:9px;color:#111;font-weight:normal;">2D</div><svg class="abs" style="left:1055.4px;top:198.7px" width="12" height="12"><circle cx="6" cy="6" r="5.2" fill="#0067c0"/><circle cx="6" cy="6" r="2.2" fill="#fff"/></svg><div class="t" style="left:1069.5px;top:201.1px;font-size:9px;color:#111;font-weight:normal;">3D</div><div class="abs" style="left:1107.4px;top:175.2px;width:62px;height:53px;border:1px solid #dcdcdc"></div><div class="abs" style="left:1112px;top:170px;width:52px;height:10px;background:#f0f0f0"></div><div class="t" style="left:1114.5px;top:171.9px;font-size:8.8px;color:#111;font-weight:normal;">Coordinates</div><svg class="abs" style="left:1120.3px;top:184.1px" width="12" height="12"><circle cx="6" cy="6" r="5.2" fill="#0067c0"/><circle cx="6" cy="6" r="2.2" fill="#fff"/></svg><div class="t" style="left:1134px;top:186.5px;font-size:9px;color:#111;font-weight:normal;">Lab</div><svg class="abs" style="left:1120.3px;top:198.7px" width="12" height="12"><circle cx="6" cy="6" r="4.8" fill="#fff" stroke="#5a5a5a" stroke-width="1"/></svg><div class="t" style="left:1134px;top:201.1px;font-size:9px;color:#111;font-weight:normal;">Yxy</div><svg class="abs" style="left:1120.3px;top:213.6px" width="12" height="12"><circle cx="6" cy="6" r="4.8" fill="#fff" stroke="#5a5a5a" stroke-width="1"/></svg><div class="t" style="left:1134px;top:216.0px;font-size:9px;color:#111;font-weight:normal;">Luv</div><svg class="abs" style="left:1174.3px;top:178.5px" width="11.5" height="11.5"><rect x="0.5" y="0.5" width="10.5" height="10.5" rx="2" fill="#0067c0"/><path d="M2.6 5.6L4.6 7.6L8.4 3.4" stroke="#fff" stroke-width="1.2" fill="none"/></svg><div class="t" style="left:1188px;top:180.2px;font-size:8.9px;color:#111;font-weight:normal;">Vertical Axis</div><svg class="abs" style="left:1174.3px;top:192.7px" width="11.5" height="11.5"><rect x="0.5" y="0.5" width="10.5" height="10.5" rx="2" fill="#0067c0"/><path d="M2.6 5.6L4.6 7.6L8.4 3.4" stroke="#fff" stroke-width="1.2" fill="none"/></svg><div class="t" style="left:1188px;top:194.5px;font-size:8.9px;color:#111;font-weight:normal;">Cross Axes</div><svg class="abs" style="left:1174.3px;top:212.8px" width="11.5" height="11.5"><rect x="0.5" y="0.5" width="10.5" height="10.5" rx="2" fill="#cccccc"/><path d="M2.6 5.6L4.6 7.6L8.4 3.4" stroke="#fff" stroke-width="1.2" fill="none"/></svg><div class="t" style="left:1188px;top:214.5px;font-size:8.9px;color:#9a9a9a;font-weight:normal;">Spectrum</div><div class="t" style="left:1196px;top:226.1px;font-size:8.9px;color:#111;font-weight:normal;">Locus</div><div class="abs" style="left:1040.6px;top:244.8px;width:12.6px;height:13px;background:#fff"></div><div class="t" style="left:1059px;top:246.8px;font-size:8.9px;color:#111;font-weight:normal;">Background:</div><div class="abs" style="left:1052px;top:267.5px;width:171px;height:2px;background:#dde3e3;border-radius:1px"></div><svg class="abs" style="left:1058.6px;top:264px" width="6" height="10"><path d="M0.5 0.5H5.5V7L3 9.5L0.5 7Z" fill="#0067c0"/></svg>
<div class="abs" style="left:1035.5px;top:289.4px;width:204px;height:379.4px;background:#f0f0f0;border-radius:4px;box-shadow:0 0 1px rgba(0,0,0,0.4)"></div><div class="t" style="left:1042px;top:296.7px;font-size:9.9px;color:#8c8c8c;font-weight:normal;">Plot Items</div><div class="abs" style="left:1222.8px;top:295.2px;width:16.2px;height:16.5px;background:#e4e4e4"></div><svg class="abs" style="left:1227px;top:299.5px" width="8" height="8"><path d="M1 1L7 7M7 1L1 7" stroke="#fafafa" stroke-width="1"/></svg><div class="t" style="left:1042px;top:317.0px;font-size:9.6px;color:#000;font-weight:bold;">Plot List</div><div class="t" style="left:1225px;top:319.4px;font-size:10px;color:#1010e8;font-weight:bold;">?</div><div class="abs" style="left:1038.5px;top:329.5px;width:196.4px;height:46.7px;background:#fff;border:1px solid #a8a8a8"></div><div class="abs" style="left:1039.5px;top:331.2px;width:194.5px;height:10.5px;background:#d8d4cc"></div><svg class="abs" style="left:1043.2px;top:332.09999999999997px" width="9.6" height="9.6"><rect x="0.5" y="0.5" width="8.6" height="8.6" rx="2" fill="#0067c0"/><path d="M2.6 5.6L4.6 7.6L8.4 3.4" stroke="#fff" stroke-width="1.2" fill="none"/></svg><svg class="abs" style="left:1061.4px;top:332.4px" width="9" height="9" viewBox="0 0 9 9"><circle cx="4.5" cy="4.5" r="4.2" fill="#222"/><path d="M4.5 4.5L4.5 1A3.5 3.5 0 0 1 7.5 2.7Z" fill="#f02020"/><path d="M4.5 4.5L7.5 2.7A3.5 3.5 0 0 1 7.5 6.3Z" fill="#f0e020"/><path d="M4.5 4.5L7.5 6.3A3.5 3.5 0 0 1 4.5 8Z" fill="#20d020"/><path d="M4.5 4.5L4.5 8A3.5 3.5 0 0 1 1.5 6.3Z" fill="#20d0f0"/><path d="M4.5 4.5L1.5 6.3A3.5 3.5 0 0 1 1.5 2.7Z" fill="#2020f0"/><path d="M4.5 4.5L1.5 2.7A3.5 3.5 0 0 1 4.5 1Z" fill="#e020e0"/></svg><div class="t" style="left:1076.2px;top:332.8px;font-size:8.9px;color:#111;font-weight:normal;">Profile</div><div class="t" style="left:1113.9px;top:332.9px;font-size:8.85px;color:#111;font-weight:normal;">cifa_iPfpro1000_baryta_II_3...</div><svg class="abs" style="left:1043.2px;top:343.0px" width="9.6" height="9.6"><rect x="0.5" y="0.5" width="8.6" height="8.6" rx="2" fill="#0067c0"/><path d="M2.6 5.6L4.6 7.6L8.4 3.4" stroke="#fff" stroke-width="1.2" fill="none"/></svg><svg class="abs" style="left:1061.4px;top:343.3px" width="9" height="9" viewBox="0 0 9 9"><circle cx="4.5" cy="4.5" r="4.2" fill="#222"/><path d="M4.5 4.5L4.5 1A3.5 3.5 0 0 1 7.5 2.7Z" fill="#f02020"/><path d="M4.5 4.5L7.5 2.7A3.5 3.5 0 0 1 7.5 6.3Z" fill="#f0e020"/><path d="M4.5 4.5L7.5 6.3A3.5 3.5 0 0 1 4.5 8Z" fill="#20d020"/><path d="M4.5 4.5L4.5 8A3.5 3.5 0 0 1 1.5 6.3Z" fill="#20d0f0"/><path d="M4.5 4.5L1.5 6.3A3.5 3.5 0 0 1 1.5 2.7Z" fill="#2020f0"/><path d="M4.5 4.5L1.5 2.7A3.5 3.5 0 0 1 4.5 1Z" fill="#e020e0"/></svg><div class="t" style="left:1076.2px;top:343.7px;font-size:8.9px;color:#111;font-weight:normal;">Profile</div><div class="t" style="left:1113.9px;top:343.8px;font-size:8.85px;color:#111;font-weight:normal;">cifa_iPfpro1100_baryta2_31...</div><div class="abs" style="left:1220px;top:381px;width:13.7px;height:13.4px;background:#fff;border:1px solid #d0d0d0;border-radius:2px"></div><svg class="abs" style="left:1221px;top:382px" width="12" height="12"><path d="M5.5 2V9M2 5.5H9" stroke="#111" stroke-width="1.6"/><path d="M9 9.5L11 9.5L10 10.8Z" fill="#333"/></svg><div class="abs" style="left:1042.3px;top:399.2px;width:195.4px;height:92.5px;border:1px solid #dcdcdc;border-radius:2px"></div><div class="abs" style="left:1047px;top:394px;width:43px;height:10px;background:#f0f0f0"></div><div class="t" style="left:1049px;top:395.4px;font-size:9.1px;color:#111;font-weight:normal;">Plot Color</div><svg class="abs" style="left:1056.8px;top:413.2px" width="12" height="12"><circle cx="6" cy="6" r="5.2" fill="#0067c0"/><circle cx="6" cy="6" r="2.2" fill="#fff"/></svg><div class="t" style="left:1071px;top:415.5px;font-size:8.9px;color:#111;font-weight:normal;">true color</div><svg class="abs" style="left:1056.8px;top:430.9px" width="12" height="12"><circle cx="6" cy="6" r="4.8" fill="#fff" stroke="#5a5a5a" stroke-width="1"/></svg><div class="t" style="left:1071.6px;top:433.3px;font-size:8.9px;color:#111;font-weight:normal;">single color:</div><svg class="abs" style="left:1056.8px;top:448.4px" width="12" height="12"><circle cx="6" cy="6" r="4.8" fill="#fff" stroke="#c8c8c8" stroke-width="1"/></svg><div class="t" style="left:1071.6px;top:450.9px;font-size:8.9px;color:#9a9a9a;font-weight:normal;">deltaE color:</div><svg class="abs" style="left:1128.3px;top:413.6px" width="11.5" height="11.5"><rect x="0.5" y="0.5" width="10.5" height="10.5" rx="2" fill="#0067c0"/><path d="M2.6 5.6L4.6 7.6L8.4 3.4" stroke="#fff" stroke-width="1.2" fill="none"/></svg><div class="t" style="left:1142px;top:415.5px;font-size:8.9px;color:#111;font-weight:normal;">Tone using L*</div><div class="abs" style="left:1130.4px;top:429.6px;width:86px;height:17px;background:#f5f5f5"></div><div class="t" style="left:1133.5px;top:433.5px;font-size:8.9px;color:#9a9a9a;font-weight:normal;">&lt;auto select&gt;</div><svg class="abs" style="left:1204.5px;top:436px" width="10" height="6"><path d="M1 1L5 5L9 1" stroke="#aaa" stroke-width="1" fill="none"/></svg><div class="abs" style="left:1130.4px;top:447px;width:86px;height:17px;background:#f5f5f5"></div><div class="t" style="left:1133.5px;top:451.1px;font-size:8.9px;color:#9a9a9a;font-weight:normal;">Delta-E2000</div><svg class="abs" style="left:1204.5px;top:453.5px" width="10" height="6"><path d="M1 1L5 5L9 1" stroke="#aaa" stroke-width="1" fill="none"/></svg><div class="abs" style="left:1130px;top:429.5px;width:1.2px;height:1.2px;background:#555"></div><div class="abs" style="left:1216px;top:429.5px;width:1.2px;height:1.2px;background:#555"></div><div class="abs" style="left:1130px;top:446px;width:1.2px;height:1.2px;background:#555"></div><div class="abs" style="left:1216px;top:446px;width:1.2px;height:1.2px;background:#555"></div><div class="abs" style="left:1130px;top:463.5px;width:1.2px;height:1.2px;background:#555"></div><div class="abs" style="left:1216px;top:463.5px;width:1.2px;height:1.2px;background:#555"></div><div class="t" style="left:1049.8px;top:469.5px;font-size:8.9px;color:#111;font-weight:normal;">Opacity:</div><div class="abs" style="left:1089px;top:476px;width:107px;height:2px;background:#dde3e3;border-radius:1px"></div><svg class="abs" style="left:1190.6px;top:472px" width="6" height="10"><path d="M0.5 0.5H5.5V7L3 9.5L0.5 7Z" fill="#0067c0"/></svg><div class="t" style="left:1040.5px;top:506.0px;font-size:8.9px;color:#111;font-weight:normal;">Plot as:</div><svg class="abs" style="left:1072.5px;top:504.3px" width="12" height="12"><circle cx="6" cy="6" r="4.8" fill="#fff" stroke="#5a5a5a" stroke-width="1"/></svg><div class="t" style="left:1087px;top:506.7px;font-size:8.9px;color:#111;font-weight:normal;">Points</div><svg class="abs" style="left:1115px;top:504.3px" width="12" height="12"><circle cx="6" cy="6" r="4.8" fill="#fff" stroke="#c8c8c8" stroke-width="1"/></svg><div class="t" style="left:1129.5px;top:506.7px;font-size:8.9px;color:#9a9a9a;font-weight:normal;">Vectors</div><svg class="abs" style="left:1162.9px;top:504.3px" width="12" height="12"><circle cx="6" cy="6" r="5.2" fill="#0067c0"/><circle cx="6" cy="6" r="2.2" fill="#fff"/></svg><div class="t" style="left:1177px;top:506.7px;font-size:8.9px;color:#111;font-weight:normal;">Volume</div><div class="abs" style="left:1043.4px;top:539px;width:78.2px;height:56.5px;border:1px solid #dcdcdc;border-radius:2px"></div><div class="abs" style="left:1048px;top:534px;width:36px;height:10px;background:#f0f0f0"></div><div class="t" style="left:1050px;top:535.1px;font-size:8.9px;color:#111;font-weight:normal;">Surface</div><svg class="abs" style="left:1047.3px;top:548.3px" width="12" height="12"><circle cx="6" cy="6" r="5.2" fill="#0067c0"/><circle cx="6" cy="6" r="2.2" fill="#fff"/></svg><div class="t" style="left:1062px;top:550.7px;font-size:8.9px;color:#111;font-weight:normal;">wireframe</div><svg class="abs" style="left:1047.3px;top:563.3px" width="12" height="12"><circle cx="6" cy="6" r="4.8" fill="#fff" stroke="#5a5a5a" stroke-width="1"/></svg><div class="t" style="left:1062px;top:565.7px;font-size:8.9px;color:#111;font-weight:normal;">flat</div><svg class="abs" style="left:1047.3px;top:578.6px" width="12" height="12"><circle cx="6" cy="6" r="4.8" fill="#fff" stroke="#5a5a5a" stroke-width="1"/></svg><div class="t" style="left:1062px;top:581.0px;font-size:8.9px;color:#111;font-weight:normal;">smooth</div><div class="t" style="left:1136px;top:543.5px;font-size:8.9px;color:#111;font-weight:normal;">Res:</div><div class="abs" style="left:1154.6px;top:541.6px;width:78.2px;height:16px;background:#fff;border:1px solid #d5d5d5;border-radius:2px"></div><div class="t" style="left:1157.5px;top:546.0px;font-size:8.9px;color:#111;font-weight:normal;">10% steps</div><svg class="abs" style="left:1221.5px;top:547.5px" width="10" height="6"><path d="M1 1L5 5L9 1" stroke="#444" stroke-width="1" fill="none"/></svg><svg class="abs" style="left:1137px;top:569px" width="11.5" height="11.5"><rect x="0.5" y="0.5" width="10.5" height="10.5" rx="2" fill="#fff" stroke="#333" stroke-width="1"/></svg><div class="t" style="left:1150.5px;top:570.5px;font-size:8.9px;color:#111;font-weight:normal;">Constrain Channels</div><svg class="abs" style="left:1137px;top:589.2px" width="11.5" height="11.5"><rect x="0.5" y="0.5" width="10.5" height="10.5" rx="2" fill="#0067c0"/><path d="M2.6 5.6L4.6 7.6L8.4 3.4" stroke="#fff" stroke-width="1.2" fill="none"/></svg><div class="t" style="left:1150.5px;top:590.5px;font-size:8.9px;color:#111;font-weight:normal;">Gamut Projection</div><svg class="abs" style="left:1047.3px;top:605.5px" width="12" height="12"><circle cx="6" cy="6" r="5.2" fill="#0067c0"/><circle cx="6" cy="6" r="2.2" fill="#fff"/></svg><div class="t" style="left:1065px;top:607.9px;font-size:8.9px;color:#111;font-weight:normal;">device gamut</div><svg class="abs" style="left:1047.3px;top:623.4px" width="12" height="12"><circle cx="6" cy="6" r="4.8" fill="#fff" stroke="#5a5a5a" stroke-width="1"/></svg><div class="abs" style="left:1065.8px;top:625.2px;width:116.8px;height:15.3px;background:#f5f5f5"></div><div class="t" style="left:1068px;top:629.0px;font-size:8.9px;color:#9a9a9a;font-weight:normal;">Abs. Colorimetric</div><svg class="abs" style="left:1170px;top:630.5px" width="10" height="6"><path d="M1 1L5 5L9 1" stroke="#aaa" stroke-width="1" fill="none"/></svg>
<div class="abs" style="left:0;top:680px;width:1280px;height:40px;background:linear-gradient(90deg,#27221f 0%,#2a2420 40%,#2f251e 75%,#33261c 100%);border-top:1px solid #3a3431"></div><svg class="abs" style="left:15px;top:689px" width="24" height="18" viewBox="0 0 24 18"><defs><linearGradient id="cl" x1="0" y1="0" x2="0" y2="1"><stop offset="0" stop-color="#a8c8ff"/><stop offset="1" stop-color="#6a9cf0"/></linearGradient></defs><path d="M5 16C2 16 1 14 1 12.5C1 10.5 3 9 5 9.3C5.5 5 9 3 12 3.5C15 4 17 6.5 17 9C20 9 23 10.5 23 13C23 15 21.5 16 19.5 16Z" fill="url(#cl)"/></svg><div class="t" style="left:43px;top:688.3px;font-size:10.2px;color:#ffffff;font-weight:normal;">16°C</div><div class="t" style="left:43px;top:701.2px;font-size:10.3px;color:#e8e4e0;font-weight:normal;">Nuvoloso</div><svg class="abs" style="left:353px;top:690.5px" width="20" height="20" viewBox="0 0 20 20"><defs><linearGradient id="wl" x1="0" y1="0" x2="1" y2="1"><stop offset="0" stop-color="#6fd8ff"/><stop offset="1" stop-color="#1a9ae8"/></linearGradient></defs><path d="M0 0H9.4V9.4H0ZM10.4 0H19.6V9.4H10.4ZM0 10.4H9.4V19.6H0ZM10.4 10.4H19.6V19.6H10.4Z" fill="url(#wl)"/></svg><div class="abs" style="left:383.7px;top:686px;width:184px;height:27.5px;background:#46403c;border-radius:14px;border:1px solid #524b46"></div><svg class="abs" style="left:393px;top:693px" width="15" height="15"><circle cx="6.3" cy="6.3" r="4.6" fill="none" stroke="#e6e2de" stroke-width="1.3"/><path d="M9.6 9.6L13.2 13.2" stroke="#e6e2de" stroke-width="1.4"/></svg><div class="t" style="left:414.5px;top:694.6px;font-size:11.3px;color:#e4e0dc;font-weight:normal;">Cerca</div><svg class="abs" style="left:577px;top:690px" width="21" height="20"><rect x="0.5" y="6" width="13" height="13" rx="1.5" fill="#6e6a68"/><rect x="7" y="0.5" width="13" height="13" rx="1.5" fill="#f2f2f2"/><rect x="7" y="6" width="6.5" height="7.5" fill="#b8b6b5"/></svg><svg class="abs" style="left:614px;top:691px" width="20" height="18" viewBox="0 0 20 18"><circle cx="15.5" cy="4" r="2.5" fill="#7b83eb"/><path d="M12 7H19V13Q19 16 15.5 16Q12 16 12 13Z" fill="#5b5fc7"/><circle cx="10" cy="3.2" r="3" fill="#9ea5ff"/><path d="M6 6.5H14V14Q14 17.5 10 17.5Q6 17.5 6 14Z" fill="#7b83eb"/><rect x="0.5" y="4.5" width="10" height="10" rx="1" fill="#fff"/><path d="M2.8 7H8.2M5.5 7V12.5" stroke="#4b53bc" stroke-width="1.8"/></svg><svg class="abs" style="left:650px;top:691px" width="22" height="19" viewBox="0 0 22 19"><path d="M1 2Q1 1 2 1H8L10 3H20Q21 3 21 4V17Q21 18 20 18H2Q1 18 1 17Z" fill="#f0b822"/><path d="M1 6H21V17Q21 18 20 18H2Q1 18 1 17Z" fill="#ffd75a"/><rect x="7" y="12.5" width="8" height="3" rx="0.6" fill="#1f7ad8"/></svg><svg class="abs" style="left:687px;top:691px" width="21" height="20" viewBox="0 0 21 20"><defs><linearGradient id="eg1" x1="0" y1="0" x2="1" y2="1"><stop offset="0" stop-color="#3bd07a"/><stop offset="1" stop-color="#2fb8e8"/></linearGradient><linearGradient id="eg2" x1="0" y1="0" x2="0" y2="1"><stop offset="0" stop-color="#1a80d8"/><stop offset="1" stop-color="#0c4ea8"/></linearGradient></defs>
<path d="M10 0.5C15.5 0.5 20 4.5 20 9.5C20 12.5 17.5 14 15 14C12 14 11 12.5 11 11C11 9 13 9 13 7C13 5 11 3.5 9 3.5C4.5 3.5 1 7 0.5 10C1 4.5 5 0.5 10 0.5Z" fill="url(#eg1)"/>
<path d="M0.5 10C1 7 4.5 3.5 9 3.5C11 3.5 13 5 13 7C11 7 7.5 8.5 7.5 12C7.5 15.5 11 18.5 15 18C13.5 19 12 19.5 10 19.5C4.5 19.5 0.5 15 0.5 10Z" fill="url(#eg2)"/></svg><div class="abs" style="left:694.5px;top:713.8px;width:5.5px;height:2.4px;background:#9a9592;border-radius:1.2px"></div><svg class="abs" style="left:723px;top:691px" width="22" height="19" viewBox="0 0 22 19"><path d="M8 1H20Q21 1 21 2V16Q21 18 19 18H8Z" fill="#28a8ea"/><path d="M8 1H21V7H8Z" fill="#0078d4"/><path d="M8 9L21 5V16Q21 18 19 18H8Z" fill="#50d9ff" opacity="0.8"/><rect x="1" y="5" width="11" height="11" rx="1" fill="#0f5fbf"/><ellipse cx="6.5" cy="10.5" rx="2.6" ry="3.2" fill="none" stroke="#fff" stroke-width="1.6"/></svg><svg class="abs" style="left:761.5px;top:691.7px" width="19" height="18" viewBox="0 0 19 18"><path d="M0.5 1.5Q0.5 0.5 1.5 0.5H17.5Q18.5 0.5 18.5 1.5V11L11 17.5H1.5Q0.5 17.5 0.5 16.5Z" fill="#ffd02a"/><path d="M11 17.5V12Q11 11 12 11H18.5Z" fill="#4a4030"/></svg><svg class="abs" style="left:797px;top:690px" width="21" height="20" viewBox="0 0 21 20"><rect x="0.5" y="0.5" width="20" height="19" rx="3" fill="#fafafa"/><path d="M4 16V12M8 16V10M12 16V11M16 16V7" stroke="#3aa83a" stroke-width="2.2"/><path d="M3 11L8 6.5L11 9L16 4" stroke="#3aa83a" stroke-width="1.8" fill="none"/><path d="M13.5 3.5H17V7" stroke="#3aa83a" stroke-width="1.8" fill="none"/></svg><svg class="abs" style="left:833.5px;top:690px" width="21" height="20" viewBox="0 0 21 20"><path d="M6.5 5V3Q6.5 1 10.5 1Q14.5 1 14.5 3V5" fill="none" stroke="#34a8d8" stroke-width="1.4"/><rect x="0.5" y="4.5" width="20" height="15" rx="2.5" fill="#f4f4f4"/><rect x="6.5" y="8" width="3.5" height="3.5" fill="#f25022"/><rect x="11" y="8" width="3.5" height="3.5" fill="#7fba00"/><rect x="6.5" y="12.5" width="3.5" height="3.5" fill="#00a4ef"/><rect x="11" y="12.5" width="3.5" height="3.5" fill="#ffb900"/></svg><svg class="abs" style="left:870px;top:691px" width="21" height="19" viewBox="0 0 21 19"><path d="M6 0.5H19Q20.5 0.5 20.5 2V17Q20.5 18.5 19 18.5H6Z" fill="#41a5ee"/><path d="M6 6.5H20.5V12.5H6Z" fill="#2b7cd3"/><path d="M6 12.5H20.5V17Q20.5 18.5 19 18.5H6Z" fill="#185abd"/><rect x="0.5" y="4.5" width="11" height="10.5" rx="1" fill="#1a5dbf"/><path d="M2.3 7L3.8 12.5L6 8.5L8.2 12.5L9.7 7" fill="none" stroke="#fff" stroke-width="1.1"/></svg><div class="abs" style="left:877.3px;top:713.8px;width:5.5px;height:2.4px;background:#9a9592;border-radius:1.2px"></div><div class="abs" style="left:900.7px;top:683.2px;width:33.2px;height:33.5px;background:#3b322c;border-radius:4px"></div><svg class="abs" style="left:906px;top:690px" width="24" height="20" viewBox="0 0 24 20" fill="none" stroke-linecap="round">
<path d="M4 10C1 9 1 5 3.5 4C4.5 2 7 1 9 1.8C11 0.5 15 0.5 17 1.5C20 1.5 23 4 22 7C23 9 21 11 18 11" stroke="#a050c0" stroke-width="1.6"/>
<path d="M5 5Q7 4 8 6M11 3Q13 3 14 5M17 3.5Q19 4.5 19 6" stroke="#f0a020" stroke-width="1.5"/>
<path d="M5 8Q8 7 10 9M13 6Q16 6 17 8" stroke="#e03060" stroke-width="1.5"/>
<path d="M4 10Q8 13 13 11M15 10Q18 9 20 10" stroke="#70c030" stroke-width="1.6"/>
<path d="M12 12Q15 14 16 19" stroke="#2a70d0" stroke-width="2"/></svg><div class="abs" style="left:909.4px;top:713.6px;width:14.6px;height:2.6px;background:#e2a8f0;border-radius:1.3px"></div><svg class="abs" style="left:1120px;top:696px" width="11" height="7"><path d="M1 6L5.5 1.5L10 6" stroke="#f0f0f0" stroke-width="1.3" fill="none"/></svg><svg class="abs" style="left:1144.5px;top:692.5px" width="15" height="15" viewBox="0 0 15 15"><rect x="0.7" y="1" width="10" height="9" rx="1" fill="none" stroke="#eee" stroke-width="1.1"/><path d="M3 12.5H8M5.5 10V12.5" stroke="#eee" stroke-width="1.1"/><circle cx="12.5" cy="2.5" r="1.6" fill="none" stroke="#eee" stroke-width="1"/><path d="M12.5 4V13.5" stroke="#eee" stroke-width="1.1"/></svg><svg class="abs" style="left:1164.5px;top:693.5px" width="15" height="14" viewBox="0 0 15 14"><path d="M1 5H3.5L7 2V12L3.5 9H1Z" fill="none" stroke="#eee" stroke-width="1.1"/><path d="M9 4.5Q10.5 7 9 9.5" stroke="#eee" stroke-width="1" fill="none"/><path d="M11 3Q13.5 7 11 11" stroke="#8a8480" stroke-width="0.9" fill="none"/></svg><div class="t" style="left:1180px;top:688px;width:64.5px;text-align:right;font-size:10.4px;color:#f4f4f4;line-height:11px">09:18</div><div class="t" style="left:1170px;top:701.3px;width:74.5px;text-align:right;font-size:10.4px;color:#f4f4f4;line-height:11px">07/10/2024</div><svg class="abs" style="left:1251px;top:693.5px" width="12" height="14" viewBox="0 0 12 14"><path d="M6 0.5C3 0.5 2 3 2 5V8.5L0.5 11H11.5L10 8.5V5C10 3 9 0.5 6 0.5Z" fill="#e8b4f2"/><path d="M4 12Q6 14 8 12Z" fill="#e8b4f2"/></svg>
</body></html>
